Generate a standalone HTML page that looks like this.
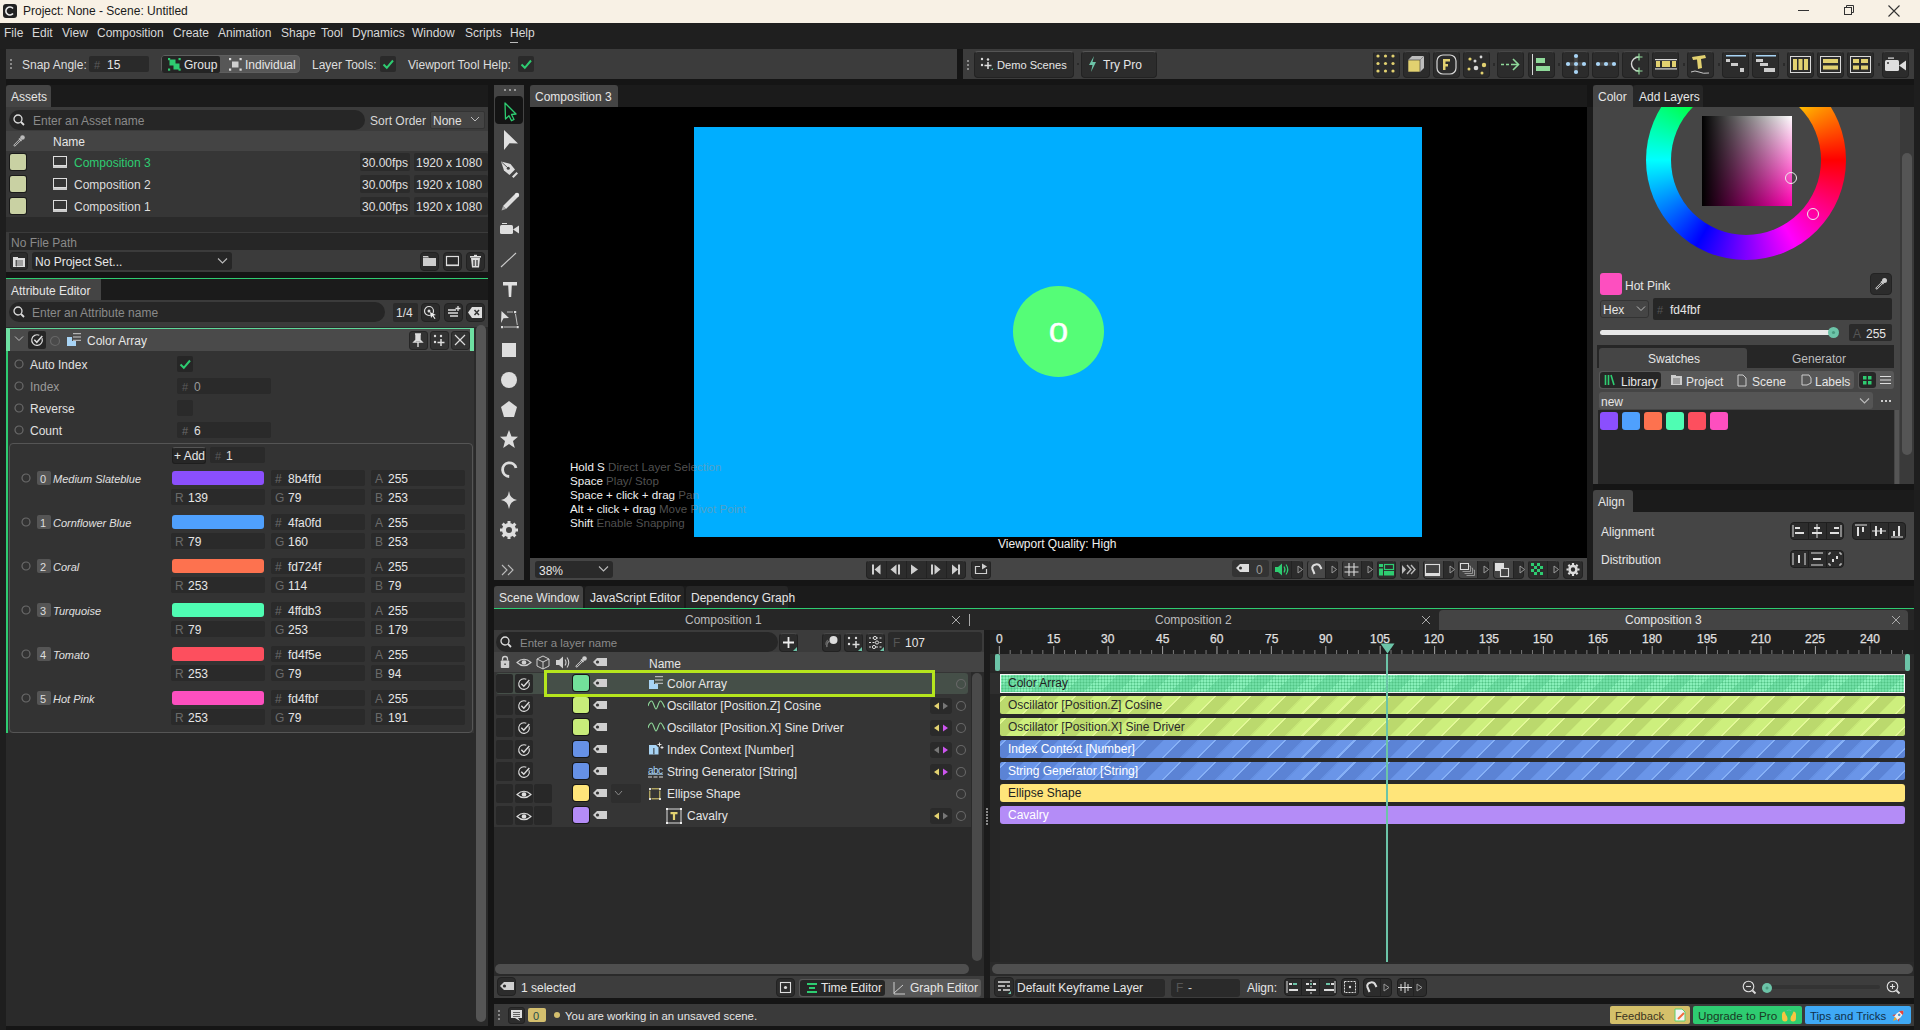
<!DOCTYPE html><html><head><meta charset="utf-8"><style>
*{margin:0;padding:0;box-sizing:border-box}
html,body{width:1920px;height:1030px;overflow:hidden;background:#151515;font-family:"Liberation Sans",sans-serif;font-size:12px;color:#dcdcdc}
.a{position:absolute}
.t{white-space:nowrap}
</style></head><body><div class="a" style="left:0px;top:0px;width:1920px;height:23px;background:#f8f1e5;"></div>
<svg class="a" style="left:3px;top:4px;" width="14" height="14" viewBox="0 0 14 14"><rect x="0" y="0" width="14" height="14" rx="3" fill="#222"/><path d="M10 4.5 A4 4 0 1 0 10 9.5" stroke="#eee" stroke-width="1.6" fill="none"/></svg>
<div class="a t" style="left:23px;top:4px;height:15px;line-height:15px;color:#1a1a1a;font-size:12px;">Project: None - Scene: Untitled</div>
<div class="a" style="left:1798px;top:10px;width:11px;height:1px;background:#333;"></div>
<svg class="a" style="left:1843px;top:4px;" width="12" height="12" viewBox="0 0 12 12"><rect x="1.5" y="3.5" width="7" height="7" fill="none" stroke="#333"/><path d="M3.5 3.5 V1.5 H10.5 V8.5 H8.5" fill="none" stroke="#333"/></svg>
<svg class="a" style="left:1888px;top:5px;" width="12" height="12" viewBox="0 0 12 12"><path d="M0.5 0.5 L11.5 11.5 M11.5 0.5 L0.5 11.5" stroke="#333" stroke-width="1.1"/></svg>
<div class="a" style="left:0px;top:23px;width:1920px;height:26px;background:#1f1f1f;"></div>
<div class="a t" style="left:4px;top:26px;height:14px;line-height:14px;color:#d8d8d8;font-size:12px;">File</div>
<div class="a t" style="left:32px;top:26px;height:14px;line-height:14px;color:#d8d8d8;font-size:12px;">Edit</div>
<div class="a t" style="left:62px;top:26px;height:14px;line-height:14px;color:#d8d8d8;font-size:12px;">View</div>
<div class="a t" style="left:97px;top:26px;height:14px;line-height:14px;color:#d8d8d8;font-size:12px;">Composition</div>
<div class="a t" style="left:173px;top:26px;height:14px;line-height:14px;color:#d8d8d8;font-size:12px;">Create</div>
<div class="a t" style="left:218px;top:26px;height:14px;line-height:14px;color:#d8d8d8;font-size:12px;">Animation</div>
<div class="a t" style="left:281px;top:26px;height:14px;line-height:14px;color:#d8d8d8;font-size:12px;">Shape</div>
<div class="a t" style="left:321px;top:26px;height:14px;line-height:14px;color:#d8d8d8;font-size:12px;">Tool</div>
<div class="a t" style="left:352px;top:26px;height:14px;line-height:14px;color:#d8d8d8;font-size:12px;">Dynamics</div>
<div class="a t" style="left:412px;top:26px;height:14px;line-height:14px;color:#d8d8d8;font-size:12px;">Window</div>
<div class="a t" style="left:465px;top:26px;height:14px;line-height:14px;color:#d8d8d8;font-size:12px;">Scripts</div>
<div class="a t" style="left:510px;top:26px;height:14px;line-height:14px;color:#d8d8d8;font-size:12px;">Help</div>
<div class="a" style="left:510px;top:42px;width:8px;height:1px;background:#bbb;"></div>
<div class="a" style="left:0px;top:49px;width:6px;height:981px;background:#1e1e1e;"></div>
<div class="a" style="left:1914px;top:49px;width:6px;height:981px;background:#1e1e1e;"></div>
<div class="a" style="left:6px;top:49px;width:951px;height:30px;background:#3c3c3c;"></div>
<div class="a" style="left:963px;top:49px;width:951px;height:30px;background:#3c3c3c;"></div>
<div class="a" style="left:10px;top:59px;width:2px;height:2px;background:#8a8a8a;"></div>
<div class="a" style="left:10px;top:63px;width:2px;height:2px;background:#8a8a8a;"></div>
<div class="a" style="left:10px;top:67px;width:2px;height:2px;background:#8a8a8a;"></div>
<div class="a t" style="left:22px;top:58px;height:14px;line-height:14px;color:#dedede;font-size:12px;">Snap Angle:</div>
<div class="a" style="left:89px;top:56px;width:60px;height:16px;background:#2a2a2a;border-radius:2px;"></div>
<div class="a t" style="left:94px;top:58px;height:14px;line-height:14px;color:#5a5a5a;font-size:11px;">#</div>
<div class="a t" style="left:107px;top:58px;height:14px;line-height:14px;color:#e6e6e6;font-size:12px;">15</div>
<div class="a" style="left:161px;top:55px;width:139px;height:18px;background:#575757;border-radius:4px;border:1px solid #5e5e5e;"></div>
<div class="a" style="left:162px;top:56px;width:58px;height:17px;background:#242424;border-radius:2px;"></div>
<svg class="a" style="left:168px;top:58px;" width="14" height="14" viewBox="0 0 14 14"><rect x="0" y="0" width="2.2" height="2.2" fill="#2ecc71"/><rect x="10.5" y="0" width="2.2" height="2.2" fill="#2ecc71"/><rect x="0" y="10.5" width="2.2" height="2.2" fill="#2ecc71"/><rect x="10.5" y="10.5" width="2.2" height="2.2" fill="#2ecc71"/><rect x="1.5" y="1.5" width="6" height="6" fill="#2ecc71"/><rect x="5.5" y="5.5" width="6" height="6" fill="#2ecc71"/></svg>
<div class="a t" style="left:184px;top:58px;height:14px;line-height:14px;color:#e6e6e6;font-size:12px;">Group</div>
<svg class="a" style="left:229px;top:58px;" width="13" height="14" viewBox="0 0 13 14"><rect x="0" y="0" width="2.2" height="2.2" fill="#ddd"/><rect x="10.5" y="0" width="2.2" height="2.2" fill="#ddd"/><rect x="0" y="10.5" width="2.2" height="2.2" fill="#ddd"/><rect x="10.5" y="10.5" width="2.2" height="2.2" fill="#ddd"/><rect x="3" y="3.5" width="6.5" height="6" fill="#d0d0d0"/></svg>
<div class="a t" style="left:245px;top:58px;height:14px;line-height:14px;color:#e6e6e6;font-size:12px;">Individual</div>
<div class="a t" style="left:312px;top:58px;height:14px;line-height:14px;color:#dedede;font-size:12px;">Layer Tools:</div>
<div class="a" style="left:380px;top:56px;width:16px;height:16px;background:#2a2a2a;border-radius:2px;"></div>
<svg class="a" style="left:380px;top:56px;" width="16" height="16" viewBox="0 0 16 16"><path d="M3.5 8.5 L6.8 11.8 L13 4.5" stroke="#2ecc71" stroke-width="2" fill="none"/></svg>
<div class="a t" style="left:408px;top:58px;height:14px;line-height:14px;color:#dedede;font-size:12px;">Viewport Tool Help:</div>
<div class="a" style="left:518px;top:56px;width:16px;height:16px;background:#2a2a2a;border-radius:2px;"></div>
<svg class="a" style="left:518px;top:56px;" width="16" height="16" viewBox="0 0 16 16"><path d="M3.5 8.5 L6.8 11.8 L13 4.5" stroke="#2ecc71" stroke-width="2" fill="none"/></svg>
<div class="a" style="left:967px;top:60px;width:2px;height:2px;background:#8a8a8a;"></div>
<div class="a" style="left:967px;top:64px;width:2px;height:2px;background:#8a8a8a;"></div>
<div class="a" style="left:967px;top:68px;width:2px;height:2px;background:#8a8a8a;"></div>
<div class="a" style="left:974px;top:51px;width:100px;height:27px;background:#2c2c2c;border-radius:4px;border:1px solid #222;border-top-color:#555;"></div>
<svg class="a" style="left:980px;top:57px;" width="13" height="14" viewBox="0 0 13 14"><circle cx="2" cy="2" r="1.2" fill="#ddd"/><circle cx="8" cy="2.5" r="1.2" fill="#ddd"/><circle cx="2" cy="8" r="1.2" fill="#ddd"/><path d="M8 5 V12 M4.5 8.5 H11.5" stroke="#ddd" stroke-width="1.5"/><path d="M11 13 L13 11 V13 Z" fill="#6cc4a8"/></svg>
<div class="a t" style="left:997px;top:58px;height:14px;line-height:14px;color:#e6e6e6;font-size:11.1px;">Demo Scenes</div>
<div class="a" style="left:1077px;top:63px;width:2px;height:2px;background:#2a2a2a;"></div>
<div class="a" style="left:1081px;top:51px;width:76px;height:27px;background:#2c2c2c;border-radius:4px;border:1px solid #222;border-top-color:#555;"></div>
<svg class="a" style="left:1088px;top:56px;" width="9" height="16" viewBox="0 0 9 16"><path d="M6 0 L1 9 H4.5 L3 16 L8 6 H4.5 Z" fill="#6cc4a8"/></svg>
<div class="a t" style="left:1103px;top:58px;height:14px;line-height:14px;color:#e6e6e6;font-size:12px;">Try Pro</div>
<div class="a" style="left:1373px;top:51px;width:27px;height:27px;background:#2c2c2c;border-radius:4px;border:1px solid #232323;border-top-color:#474747;"></div>
<div class="a" style="left:1403px;top:51px;width:27px;height:27px;background:#2c2c2c;border-radius:4px;border:1px solid #232323;border-top-color:#474747;"></div>
<div class="a" style="left:1433px;top:51px;width:27px;height:27px;background:#2c2c2c;border-radius:4px;border:1px solid #232323;border-top-color:#474747;"></div>
<div class="a" style="left:1463px;top:51px;width:27px;height:27px;background:#2c2c2c;border-radius:4px;border:1px solid #232323;border-top-color:#474747;"></div>
<div class="a" style="left:1497px;top:51px;width:27px;height:27px;background:#2c2c2c;border-radius:4px;border:1px solid #232323;border-top-color:#474747;"></div>
<div class="a" style="left:1528px;top:51px;width:27px;height:27px;background:#2c2c2c;border-radius:4px;border:1px solid #232323;border-top-color:#474747;"></div>
<div class="a" style="left:1562px;top:51px;width:27px;height:27px;background:#2c2c2c;border-radius:4px;border:1px solid #232323;border-top-color:#474747;"></div>
<div class="a" style="left:1592px;top:51px;width:27px;height:27px;background:#2c2c2c;border-radius:4px;border:1px solid #232323;border-top-color:#474747;"></div>
<div class="a" style="left:1622px;top:51px;width:27px;height:27px;background:#2c2c2c;border-radius:4px;border:1px solid #232323;border-top-color:#474747;"></div>
<div class="a" style="left:1652px;top:51px;width:27px;height:27px;background:#2c2c2c;border-radius:4px;border:1px solid #232323;border-top-color:#474747;"></div>
<div class="a" style="left:1687px;top:51px;width:27px;height:27px;background:#2c2c2c;border-radius:4px;border:1px solid #232323;border-top-color:#474747;"></div>
<div class="a" style="left:1722px;top:51px;width:27px;height:27px;background:#2c2c2c;border-radius:4px;border:1px solid #232323;border-top-color:#474747;"></div>
<div class="a" style="left:1752px;top:51px;width:27px;height:27px;background:#2c2c2c;border-radius:4px;border:1px solid #232323;border-top-color:#474747;"></div>
<div class="a" style="left:1787px;top:51px;width:27px;height:27px;background:#2c2c2c;border-radius:4px;border:1px solid #232323;border-top-color:#474747;"></div>
<div class="a" style="left:1817px;top:51px;width:27px;height:27px;background:#2c2c2c;border-radius:4px;border:1px solid #232323;border-top-color:#474747;"></div>
<div class="a" style="left:1847px;top:51px;width:27px;height:27px;background:#2c2c2c;border-radius:4px;border:1px solid #232323;border-top-color:#474747;"></div>
<div class="a" style="left:1882px;top:51px;width:27px;height:27px;background:#2c2c2c;border-radius:4px;border:1px solid #232323;border-top-color:#474747;"></div>
<div class="a" style="left:1493px;top:63px;width:2px;height:3px;background:#2a2a2a;"></div>
<div class="a" style="left:1558px;top:63px;width:2px;height:3px;background:#2a2a2a;"></div>
<div class="a" style="left:1683px;top:63px;width:2px;height:3px;background:#2a2a2a;"></div>
<div class="a" style="left:1718px;top:63px;width:2px;height:3px;background:#2a2a2a;"></div>
<div class="a" style="left:1783px;top:63px;width:2px;height:3px;background:#2a2a2a;"></div>
<div class="a" style="left:1878px;top:63px;width:2px;height:3px;background:#2a2a2a;"></div>
<svg class="a" style="left:1373px;top:51px;" width="27" height="27" viewBox="0 0 27 27"><circle cx="5.0" cy="5.0" r="1.6" fill="#e2d170"/><circle cx="5.0" cy="12.5" r="1.6" fill="#e2d170"/><circle cx="5.0" cy="20.0" r="1.6" fill="#e2d170"/><circle cx="12.5" cy="5.0" r="1.6" fill="#e2d170"/><circle cx="12.5" cy="12.5" r="1.6" fill="#e2d170"/><circle cx="12.5" cy="20.0" r="1.6" fill="#e2d170"/><circle cx="20.0" cy="5.0" r="1.6" fill="#e2d170"/><circle cx="20.0" cy="12.5" r="1.6" fill="#e2d170"/><circle cx="20.0" cy="20.0" r="1.6" fill="#e2d170"/></svg>
<svg class="a" style="left:1403px;top:51px;" width="27" height="27" viewBox="0 0 27 27"><path d="M5 9 L9 5 H21 V17 L17 21 Z" fill="#bdbdbd"/><rect x="5" y="9" width="12" height="12" fill="#e2d170" stroke="#333" stroke-width="0.6"/><path d="M17 9 L21 5" stroke="#888"/></svg>
<svg class="a" style="left:1433px;top:51px;" width="27" height="27" viewBox="0 0 27 27"><rect x="4" y="4" width="19" height="19" rx="6" fill="none" stroke="#d8d8d8" stroke-width="1.2"/><rect x="10" y="8" width="2.5" height="11" fill="#e2d170"/><rect x="10" y="8" width="7" height="2.5" fill="#e2d170"/><rect x="10" y="13" width="5" height="2.5" fill="#e2d170"/></svg>
<svg class="a" style="left:1463px;top:51px;" width="27" height="27" viewBox="0 0 27 27"><circle cx="7" cy="8" r="1.6" fill="#e2d170"/><circle cx="18" cy="6" r="1.4" fill="#d8d8d8"/><circle cx="12" cy="10" r="1.5" fill="#d8d8d8"/><circle cx="21" cy="14" r="2.2" fill="#e2d170"/><circle cx="13" cy="17" r="2.3" fill="#d8d8d8"/><circle cx="6" cy="18" r="1.5" fill="#e2d170"/><circle cx="19" cy="22" r="1.5" fill="#e2d170"/></svg>
<svg class="a" style="left:1497px;top:51px;" width="27" height="27" viewBox="0 0 27 27"><path d="M4 13.5 H7 M9 13.5 H12 M14 13.5 H21" stroke="#8fd99a" stroke-width="1.6"/><path d="M16 8 L21.5 13.5 L16 19" stroke="#8fd99a" stroke-width="1.6" fill="none"/></svg>
<svg class="a" style="left:1528px;top:51px;" width="27" height="27" viewBox="0 0 27 27"><rect x="4" y="3" width="1" height="21" fill="#d8d8d8"/><rect x="8" y="7" width="9" height="5" fill="#8fd99a"/><rect x="8" y="15" width="14" height="5" fill="#8fd99a"/></svg>
<svg class="a" style="left:1562px;top:51px;" width="27" height="27" viewBox="0 0 27 27"><path d="M14 5 V21 M6 13 H22" stroke="#4a4a4a" stroke-width="3.5" stroke-linecap="round"/><circle cx="14" cy="5" r="2.1" fill="#a8d4f5"/><circle cx="14" cy="13" r="2.1" fill="#a8d4f5"/><circle cx="14" cy="21" r="2.1" fill="#a8d4f5"/><circle cx="6" cy="13" r="2.1" fill="#a8d4f5"/><circle cx="22" cy="13" r="2.1" fill="#a8d4f5"/></svg>
<svg class="a" style="left:1592px;top:51px;" width="27" height="27" viewBox="0 0 27 27"><path d="M6 13 H22" stroke="#4a4a4a" stroke-width="3.5" stroke-linecap="round"/><circle cx="6" cy="13" r="2.1" fill="#a8d4f5"/><circle cx="14" cy="13" r="2.1" fill="#a8d4f5"/><circle cx="22" cy="13" r="2.1" fill="#a8d4f5"/></svg>
<svg class="a" style="left:1622px;top:51px;" width="27" height="27" viewBox="0 0 27 27"><path d="M17 6 A7.5 7 0 0 0 17 20" stroke="#d8d8d8" stroke-width="1.4" fill="none"/><path d="M17 2.5 V9.5 M13.5 6 H20.5 M17 16.5 V23.5 M13.5 20 H20.5" stroke="#8fd99a" stroke-width="1.2"/></svg>
<svg class="a" style="left:1652px;top:51px;" width="27" height="27" viewBox="0 0 27 27"><rect x="3" y="8" width="22" height="1.2" fill="#d8d8d8"/><rect x="3" y="17.3" width="22" height="1.2" fill="#d8d8d8"/><rect x="4" y="10" width="4" height="6" fill="#e2d170"/><rect x="10" y="10" width="8" height="6" fill="#e2d170"/><rect x="20" y="10" width="4" height="6" fill="#e2d170"/></svg>
<svg class="a" style="left:1687px;top:51px;" width="27" height="27" viewBox="0 0 27 27"><path d="M5 6 L18 4 L19 7 L14 8 L15 17 L11 18 L10 8.5 L6 9 Z" fill="#e2d170"/><path d="M4 21 Q8 19 12 21 T22 22" stroke="#d8d8d8" stroke-width="0.9" fill="none"/></svg>
<svg class="a" style="left:1722px;top:51px;" width="27" height="27" viewBox="0 0 27 27"><rect x="4" y="4" width="20" height="1.5" fill="#a8d4f5"/><rect x="4" y="8" width="4" height="3" fill="#ccc"/><rect x="9" y="12" width="7" height="3" fill="#ccc"/><rect x="18" y="17" width="4" height="4" fill="#ccc"/></svg>
<svg class="a" style="left:1752px;top:51px;" width="27" height="27" viewBox="0 0 27 27"><rect x="4" y="4" width="20" height="1.5" fill="#a8d4f5"/><rect x="4" y="8" width="7" height="3" fill="#ccc"/><rect x="8" y="12" width="8" height="3" fill="#ccc"/><rect x="12" y="17" width="11" height="4" fill="#ccc"/></svg>
<svg class="a" style="left:1787px;top:51px;" width="27" height="27" viewBox="0 0 27 27"><rect x="3.5" y="5.5" width="20" height="16" fill="none" stroke="#d8d8d8"/><rect x="6" y="8" width="4" height="11" fill="#e2d170"/><rect x="11.5" y="8" width="4" height="11" fill="#e2d170"/><rect x="17" y="8" width="4" height="11" fill="#e2d170"/></svg>
<svg class="a" style="left:1817px;top:51px;" width="27" height="27" viewBox="0 0 27 27"><rect x="3.5" y="5.5" width="20" height="16" fill="none" stroke="#d8d8d8"/><rect x="6" y="8" width="15" height="4" fill="#e2d170"/><rect x="6" y="14.5" width="15" height="4" fill="#e2d170"/></svg>
<svg class="a" style="left:1847px;top:51px;" width="27" height="27" viewBox="0 0 27 27"><rect x="3.5" y="5.5" width="20" height="16" fill="none" stroke="#d8d8d8"/><rect x="6" y="8" width="6" height="4" fill="#e2d170"/><rect x="14" y="8" width="7" height="4" fill="#e2d170"/><rect x="6" y="14.5" width="6" height="4" fill="#e2d170"/><rect x="14" y="14.5" width="7" height="4" fill="#e2d170"/></svg>
<svg class="a" style="left:1882px;top:51px;" width="27" height="27" viewBox="0 0 27 27"><rect x="3" y="9" width="14" height="11" rx="1.5" fill="#ddd"/><path d="M17 14.5 L24 9.5 V19.5 Z" fill="#ddd"/><rect x="6" y="6.5" width="6" height="1.2" fill="#ddd"/><circle cx="6" cy="12" r="1" fill="#333"/></svg>
<div class="a" style="left:6px;top:85px;width:482px;height:22px;background:#1b1b1b;"></div>
<div class="a" style="left:6px;top:85px;width:45px;height:22px;background:#444;border-radius:3px 3px 0 0;"></div>
<div class="a t" style="left:11px;top:90px;height:14px;line-height:14px;color:#e6e6e6;font-size:12px;">Assets</div>
<div class="a" style="left:6px;top:107px;width:482px;height:24px;background:#3b3b3b;"></div>
<div class="a" style="left:9px;top:110px;width:356px;height:20px;background:#262626;border-radius:10px;"></div>
<svg class="a" style="left:13px;top:114px;" width="12" height="12" viewBox="0 0 12 12"><circle cx="5" cy="5" r="4" fill="none" stroke="#ddd" stroke-width="1.3"/><path d="M8 8 L11 11" stroke="#ddd" stroke-width="1.8"/></svg>
<div class="a t" style="left:33px;top:114px;height:14px;line-height:14px;color:#8a8a8a;font-size:12px;">Enter an Asset name</div>
<div class="a t" style="left:370px;top:114px;height:14px;line-height:14px;color:#d8d8d8;font-size:12px;">Sort Order</div>
<div class="a" style="left:430px;top:111px;width:55px;height:18px;background:#444;border-radius:2px;border:1px solid #333;"></div>
<div class="a t" style="left:433px;top:114px;height:14px;line-height:14px;color:#e0e0e0;font-size:12px;">None</div>
<svg class="a" style="left:470px;top:115px;" width="10" height="8" viewBox="0 0 10 8"><path d="M1 2 L5 6 L9 2" stroke="#bbb" fill="none"/></svg>
<div class="a" style="left:6px;top:131px;width:482px;height:20px;background:#444;"></div>
<svg class="a" style="left:12px;top:134px;" width="14" height="14" viewBox="0 0 14 14"><path d="M2 12 L9 5" stroke="#bbb" stroke-width="2.2"/><path d="M2.6 11.4 L8.4 5.6" stroke="#444" stroke-width="0.9"/><circle cx="10.5" cy="3.5" r="2.3" fill="#bbb"/><path d="M7 4.5 L9.5 7" stroke="#bbb" stroke-width="1.5"/></svg>
<div class="a t" style="left:53px;top:135px;height:14px;line-height:14px;color:#e6e6e6;font-size:12px;">Name</div>
<div class="a" style="left:6px;top:151px;width:482px;height:81px;background:#363636;"></div>
<div class="a" style="left:10px;top:154px;width:16px;height:16px;background:#c9d1a3;border-radius:2px;box-shadow:0 0 0 1px #1a1a1a;"></div>
<svg class="a" style="left:53px;top:156px;" width="14" height="12" viewBox="0 0 14 12"><rect x="0.5" y="0.5" width="13" height="9" fill="none" stroke="#ddd"/><rect x="0" y="10" width="14" height="2" fill="#ccc"/></svg>
<div class="a t" style="left:74px;top:156px;height:14px;line-height:14px;color:#2ecc71;font-size:12px;">Composition 3</div>
<div class="a" style="left:360px;top:153px;width:50px;height:18px;background:#2b2b2b;border-radius:2px;"></div>
<div class="a t" style="left:362px;top:156px;height:14px;line-height:14px;color:#e0e0e0;font-size:12px;">30.00fps</div>
<div class="a" style="left:414px;top:153px;width:74px;height:18px;background:#2b2b2b;border-radius:2px;"></div>
<div class="a t" style="left:416px;top:156px;height:14px;line-height:14px;color:#e0e0e0;font-size:12px;">1920 x 1080</div>
<div class="a" style="left:10px;top:176px;width:16px;height:16px;background:#c9d1a3;border-radius:2px;box-shadow:0 0 0 1px #1a1a1a;"></div>
<svg class="a" style="left:53px;top:178px;" width="14" height="12" viewBox="0 0 14 12"><rect x="0.5" y="0.5" width="13" height="9" fill="none" stroke="#ddd"/><rect x="0" y="10" width="14" height="2" fill="#ccc"/></svg>
<div class="a t" style="left:74px;top:178px;height:14px;line-height:14px;color:#dedede;font-size:12px;">Composition 2</div>
<div class="a" style="left:360px;top:175px;width:50px;height:18px;background:#2b2b2b;border-radius:2px;"></div>
<div class="a t" style="left:362px;top:178px;height:14px;line-height:14px;color:#e0e0e0;font-size:12px;">30.00fps</div>
<div class="a" style="left:414px;top:175px;width:74px;height:18px;background:#2b2b2b;border-radius:2px;"></div>
<div class="a t" style="left:416px;top:178px;height:14px;line-height:14px;color:#e0e0e0;font-size:12px;">1920 x 1080</div>
<div class="a" style="left:10px;top:198px;width:16px;height:16px;background:#c9d1a3;border-radius:2px;box-shadow:0 0 0 1px #1a1a1a;"></div>
<svg class="a" style="left:53px;top:200px;" width="14" height="12" viewBox="0 0 14 12"><rect x="0.5" y="0.5" width="13" height="9" fill="none" stroke="#ddd"/><rect x="0" y="10" width="14" height="2" fill="#ccc"/></svg>
<div class="a t" style="left:74px;top:200px;height:14px;line-height:14px;color:#dedede;font-size:12px;">Composition 1</div>
<div class="a" style="left:360px;top:197px;width:50px;height:18px;background:#2b2b2b;border-radius:2px;"></div>
<div class="a t" style="left:362px;top:200px;height:14px;line-height:14px;color:#e0e0e0;font-size:12px;">30.00fps</div>
<div class="a" style="left:414px;top:197px;width:74px;height:18px;background:#2b2b2b;border-radius:2px;"></div>
<div class="a t" style="left:416px;top:200px;height:14px;line-height:14px;color:#e0e0e0;font-size:12px;">1920 x 1080</div>
<div class="a" style="left:6px;top:217px;width:482px;height:15px;background:#2a2a2a;"></div>
<div class="a" style="left:6px;top:232px;width:482px;height:40px;background:#3b3b3b;"></div>
<div class="a" style="left:9px;top:233px;width:479px;height:17px;background:#262626;"></div>
<div class="a t" style="left:11px;top:236px;height:14px;line-height:14px;color:#8a8a8a;font-size:12px;">No File Path</div>
<div class="a" style="left:10px;top:252px;width:18px;height:18px;background:#2b2b2b;border-radius:3px;border:1px solid #222;"></div>
<svg class="a" style="left:12px;top:254px;" width="14" height="14" viewBox="0 0 14 14"><path d="M1 3 H6 V4 H1Z" fill="#ddd"/><rect x="1" y="4" width="12" height="9" fill="#ddd"/><path d="M3 7 H11 M3 9 H11 M3 11 H11" stroke="#444" stroke-width="0.8"/><path d="M4.5 6 V12.5" stroke="#444" stroke-width="0.8"/></svg>
<div class="a" style="left:32px;top:252px;width:200px;height:18px;background:#262626;border-radius:3px;"></div>
<div class="a t" style="left:35px;top:255px;height:14px;line-height:14px;color:#e6e6e6;font-size:12px;">No Project Set...</div>
<svg class="a" style="left:217px;top:257px;" width="11" height="8" viewBox="0 0 11 8"><path d="M1 1.5 L5.5 6 L10 1.5" stroke="#bbb" fill="none" stroke-width="1.1"/></svg>
<div class="a" style="left:420px;top:252px;width:19px;height:19px;background:#2b2b2b;border-radius:4px;border:1px solid #222;"></div>
<svg class="a" style="left:422px;top:254px;" width="14" height="14" viewBox="0 0 14 14"><path d="M1 2 H6 L7 3.5 H1 Z" fill="#ccc"/><rect x="1" y="4" width="13" height="8" fill="#ccc"/></svg>
<div class="a" style="left:443px;top:252px;width:19px;height:19px;background:#2b2b2b;border-radius:4px;border:1px solid #222;"></div>
<svg class="a" style="left:445px;top:254px;" width="14" height="14" viewBox="0 0 14 14"><rect x="1.5" y="2.5" width="12" height="9" fill="none" stroke="#ddd" stroke-width="1.2"/><rect x="1" y="10.5" width="13" height="1.5" fill="#ddd"/></svg>
<div class="a" style="left:466px;top:252px;width:19px;height:19px;background:#2b2b2b;border-radius:4px;border:1px solid #222;"></div>
<svg class="a" style="left:468px;top:254px;" width="14" height="14" viewBox="0 0 14 14"><path d="M3 4 H12 L11 13.5 H4 Z" fill="#ddd"/><rect x="2" y="2" width="11" height="1.6" fill="#ddd"/><rect x="6" y="0.8" width="3" height="1.5" fill="#ddd"/><path d="M6 6 V12 M9 6 V12" stroke="#2b2b2b" stroke-width="1.2"/></svg>
<div class="a" style="left:6px;top:278px;width:482px;height:1px;background:#2ecc71;"></div>
<div class="a" style="left:6px;top:279px;width:482px;height:21px;background:#1b1b1b;"></div>
<div class="a" style="left:6px;top:279px;width:95px;height:21px;background:#444;"></div>
<div class="a t" style="left:11px;top:284px;height:14px;line-height:14px;color:#e6e6e6;font-size:12px;">Attribute Editor</div>
<div class="a" style="left:6px;top:300px;width:482px;height:27px;background:#3b3b3b;"></div>
<div class="a" style="left:9px;top:302px;width:376px;height:20px;background:#262626;border-radius:10px;"></div>
<svg class="a" style="left:13px;top:306px;" width="12" height="12" viewBox="0 0 12 12"><circle cx="5" cy="5" r="4" fill="none" stroke="#ddd" stroke-width="1.3"/><path d="M8 8 L11 11" stroke="#ddd" stroke-width="1.8"/></svg>
<div class="a t" style="left:32px;top:306px;height:14px;line-height:14px;color:#8a8a8a;font-size:12px;">Enter an Attribute name</div>
<div class="a" style="left:393px;top:303px;width:25px;height:19px;background:#2b2b2b;border-radius:2px;"></div>
<div class="a t" style="left:396px;top:306px;height:14px;line-height:14px;color:#e0e0e0;font-size:12px;">1/4</div>
<div class="a" style="left:421px;top:303px;width:19px;height:19px;background:#2b2b2b;border-radius:4px;border:1px solid #222;"></div>
<div class="a" style="left:444px;top:303px;width:19px;height:19px;background:#2b2b2b;border-radius:4px;border:1px solid #222;"></div>
<div class="a" style="left:466px;top:303px;width:19px;height:19px;background:#2b2b2b;border-radius:4px;border:1px solid #222;"></div>
<svg class="a" style="left:423px;top:305px;" width="15" height="15" viewBox="0 0 15 15"><circle cx="6" cy="6" r="4.5" fill="none" stroke="#ddd" stroke-width="1.2"/><circle cx="6" cy="6" r="1.5" fill="#ddd"/><path d="M7 7 L13 10 L10.5 10.5 L12.5 13.5 L11.5 14 L9.5 11 L8 13 Z" fill="#eee"/></svg>
<svg class="a" style="left:446px;top:305px;" width="15" height="15" viewBox="0 0 15 15"><path d="M2 5 H10 M2 8 H12 M4 11 H12" stroke="#ddd" stroke-width="1.6"/><path d="M12 1 V6 M9.5 3.5 H14.5" stroke="#ddd" stroke-width="1.3"/></svg>
<svg class="a" style="left:468px;top:306px;" width="15" height="13" viewBox="0 0 15 13"><path d="M4 1 H14 V12 H4 L0 6.5 Z" fill="#ddd"/><path d="M6.5 4 L11 9 M11 4 L6.5 9" stroke="#333" stroke-width="1.5"/></svg>
<div class="a" style="left:6px;top:327px;width:470px;height:699px;background:#2a2a2a;"></div>
<div class="a" style="left:6px;top:351px;width:468px;height:382px;background:#333;"></div>
<div class="a" style="left:476px;top:327px;width:12px;height:699px;background:#2a2a2a;"></div>
<div class="a" style="left:476px;top:325px;width:10px;height:697px;background:#555;border-radius:5px;"></div>
<div class="a" style="left:6px;top:328px;width:467px;height:23px;background:#4a4a4a;border-top:1px solid #5fd89a;"></div>
<div class="a" style="left:6px;top:328px;width:4px;height:23px;background:#6ee0a2;"></div>
<svg class="a" style="left:14px;top:335px;" width="10" height="8" viewBox="0 0 10 8"><path d="M1 1.5 L5 5.5 L9 1.5" stroke="#bbb" fill="none"/></svg>
<div class="a" style="left:28px;top:331px;width:18px;height:18px;background:#262626;border-radius:2px;"></div>
<svg class="a" style="left:30px;top:333px;" width="14" height="14" viewBox="0 0 14 14"><path d="M12 5.3 A5.3 5.3 0 1 1 9.3 2.3" fill="none" stroke="#ddd" stroke-width="1.2"/><path d="M4.3 6.8 L6.8 9.3 L12.3 3" stroke="#ddd" stroke-width="1.5" fill="none"/></svg>
<svg class="a" style="left:49px;top:335px;" width="12" height="12" viewBox="0 0 12 12"><circle cx="6" cy="6" r="4.5" fill="none" stroke="#666" stroke-width="1.2"/></svg>
<svg class="a" style="left:66px;top:333px;" width="15" height="14" viewBox="0 0 15 14"><path d="M1 4 H6 V8 H10 V13 H1 Z" fill="#a8d4f5"/><path d="M7 0.7 H15 M7 4 H15 M7 7.3 H15" stroke="#ddd" stroke-width="0.9"/></svg>
<div class="a t" style="left:87px;top:334px;height:14px;line-height:14px;color:#e6e6e6;font-size:12px;">Color Array</div>
<div class="a" style="left:409px;top:331px;width:19px;height:19px;background:#333;border-radius:3px;border:1px solid #262626;"></div>
<svg class="a" style="left:411px;top:333px;" width="14" height="14" viewBox="0 0 14 14"><path d="M4 1 H10 M5 1 V7 L3 9 H11 L9 7 V1 M7 9 V14" stroke="#ddd" stroke-width="1.4" fill="none"/><rect x="5" y="1" width="4" height="7" fill="#ddd"/></svg>
<div class="a" style="left:430px;top:331px;width:19px;height:19px;background:#333;border-radius:3px;border:1px solid #262626;"></div>
<svg class="a" style="left:432px;top:333px;" width="14" height="14" viewBox="0 0 14 14"><circle cx="3" cy="3" r="1.2" fill="#ddd"/><circle cx="9" cy="3" r="1.2" fill="#ddd"/><circle cx="3" cy="9" r="1.2" fill="#ddd"/><path d="M9 6 V13 M5.5 9.5 H12.5" stroke="#ddd" stroke-width="1.5"/></svg>
<div class="a" style="left:451px;top:331px;width:19px;height:19px;background:#333;border-radius:3px;border:1px solid #262626;"></div>
<svg class="a" style="left:453px;top:333px;" width="14" height="14" viewBox="0 0 14 14"><path d="M2 2 L12 12 M12 2 L2 12" stroke="#ddd" stroke-width="1.2"/></svg>
<svg class="a" style="left:14px;top:359px;" width="10" height="10" viewBox="0 0 10 10"><circle cx="5" cy="5" r="4" fill="none" stroke="#6a6a6a" stroke-width="1.2"/></svg>
<div class="a t" style="left:30px;top:358px;height:14px;line-height:14px;color:#e0e0e0;font-size:12px;">Auto Index</div>
<svg class="a" style="left:14px;top:381px;" width="10" height="10" viewBox="0 0 10 10"><circle cx="5" cy="5" r="4" fill="none" stroke="#6a6a6a" stroke-width="1.2"/></svg>
<div class="a t" style="left:30px;top:380px;height:14px;line-height:14px;color:#9a9a9a;font-size:12px;">Index</div>
<svg class="a" style="left:14px;top:403px;" width="10" height="10" viewBox="0 0 10 10"><circle cx="5" cy="5" r="4" fill="none" stroke="#6a6a6a" stroke-width="1.2"/></svg>
<div class="a t" style="left:30px;top:402px;height:14px;line-height:14px;color:#e0e0e0;font-size:12px;">Reverse</div>
<svg class="a" style="left:14px;top:425px;" width="10" height="10" viewBox="0 0 10 10"><circle cx="5" cy="5" r="4" fill="none" stroke="#6a6a6a" stroke-width="1.2"/></svg>
<div class="a t" style="left:30px;top:424px;height:14px;line-height:14px;color:#e0e0e0;font-size:12px;">Count</div>
<div class="a" style="left:177px;top:356px;width:16px;height:16px;background:#262626;border-radius:2px;"></div>
<svg class="a" style="left:177px;top:356px;" width="16" height="16" viewBox="0 0 16 16"><path d="M3.5 8.5 L6.8 11.8 L13 4.5" stroke="#2ecc71" stroke-width="2" fill="none"/></svg>
<div class="a" style="left:177px;top:378px;width:94px;height:16px;background:#2a2a2a;border-radius:2px;"></div>
<div class="a t" style="left:182px;top:380px;height:14px;line-height:14px;color:#5a5a5a;font-size:11px;">#</div>
<div class="a t" style="left:194px;top:380px;height:14px;line-height:14px;color:#9a9a9a;font-size:12px;">0</div>
<div class="a" style="left:177px;top:400px;width:16px;height:16px;background:#2a2a2a;border-radius:2px;"></div>
<div class="a" style="left:177px;top:422px;width:94px;height:16px;background:#2a2a2a;border-radius:2px;"></div>
<div class="a t" style="left:182px;top:424px;height:14px;line-height:14px;color:#6a6a6a;font-size:11px;">#</div>
<div class="a t" style="left:194px;top:424px;height:14px;line-height:14px;color:#e0e0e0;font-size:12px;">6</div>
<div class="a" style="left:9px;top:443px;width:464px;height:290px;border:1px solid #555;border-radius:4px;background:#333;"></div>
<div class="a" style="left:172px;top:447px;width:34px;height:17px;background:#262626;border-radius:3px;border:1px solid #1e1e1e;border-top-color:#555;"></div>
<div class="a t" style="left:174px;top:449px;height:14px;line-height:14px;color:#e6e6e6;font-size:12px;">+ Add</div>
<div class="a" style="left:210px;top:447px;width:55px;height:16px;background:#2a2a2a;border-radius:2px;"></div>
<div class="a t" style="left:215px;top:449px;height:14px;line-height:14px;color:#5a5a5a;font-size:11px;">#</div>
<div class="a t" style="left:226px;top:449px;height:14px;line-height:14px;color:#e0e0e0;font-size:12px;">1</div>
<svg class="a" style="left:21px;top:473px;" width="10" height="10" viewBox="0 0 10 10"><circle cx="5" cy="5" r="4" fill="none" stroke="#6a6a6a" stroke-width="1.2"/></svg>
<div class="a" style="left:37px;top:471px;width:14px;height:14px;background:#555;border-radius:2px;"></div>
<div class="a t" style="left:40px;top:472px;height:14px;line-height:14px;color:#ddd;font-size:11px;">0</div>
<div class="a t" style="left:53px;top:472px;height:14px;line-height:14px;color:#e0e0e0;font-size:11px;font-style:italic;">Medium Slateblue</div>
<div class="a" style="left:172px;top:471px;width:92px;height:14px;background:#8b4ffd;border-radius:3px;"></div>
<div class="a" style="left:271px;top:470px;width:94px;height:16px;background:#2a2a2a;border-radius:2px;"></div>
<div class="a t" style="left:275px;top:472px;height:14px;line-height:14px;color:#6a6a6a;font-size:12px;">#</div>
<div class="a t" style="left:288px;top:472px;height:14px;line-height:14px;color:#e6e6e6;font-size:12px;">8b4ffd</div>
<div class="a" style="left:371px;top:470px;width:94px;height:16px;background:#2a2a2a;border-radius:2px;"></div>
<div class="a t" style="left:375px;top:472px;height:14px;line-height:14px;color:#6a6a6a;font-size:12px;">A</div>
<div class="a t" style="left:388px;top:472px;height:14px;line-height:14px;color:#e6e6e6;font-size:12px;">255</div>
<div class="a" style="left:171px;top:489px;width:94px;height:16px;background:#2a2a2a;border-radius:2px;"></div>
<div class="a t" style="left:175px;top:491px;height:14px;line-height:14px;color:#6a6a6a;font-size:12px;">R</div>
<div class="a t" style="left:188px;top:491px;height:14px;line-height:14px;color:#e6e6e6;font-size:12px;">139</div>
<div class="a" style="left:271px;top:489px;width:94px;height:16px;background:#2a2a2a;border-radius:2px;"></div>
<div class="a t" style="left:275px;top:491px;height:14px;line-height:14px;color:#6a6a6a;font-size:12px;">G</div>
<div class="a t" style="left:288px;top:491px;height:14px;line-height:14px;color:#e6e6e6;font-size:12px;">79</div>
<div class="a" style="left:371px;top:489px;width:94px;height:16px;background:#2a2a2a;border-radius:2px;"></div>
<div class="a t" style="left:375px;top:491px;height:14px;line-height:14px;color:#6a6a6a;font-size:12px;">B</div>
<div class="a t" style="left:388px;top:491px;height:14px;line-height:14px;color:#e6e6e6;font-size:12px;">253</div>
<svg class="a" style="left:21px;top:517px;" width="10" height="10" viewBox="0 0 10 10"><circle cx="5" cy="5" r="4" fill="none" stroke="#6a6a6a" stroke-width="1.2"/></svg>
<div class="a" style="left:37px;top:515px;width:14px;height:14px;background:#555;border-radius:2px;"></div>
<div class="a t" style="left:40px;top:516px;height:14px;line-height:14px;color:#ddd;font-size:11px;">1</div>
<div class="a t" style="left:53px;top:516px;height:14px;line-height:14px;color:#e0e0e0;font-size:11px;font-style:italic;">Cornflower Blue</div>
<div class="a" style="left:172px;top:515px;width:92px;height:14px;background:#4fa0fd;border-radius:3px;"></div>
<div class="a" style="left:271px;top:514px;width:94px;height:16px;background:#2a2a2a;border-radius:2px;"></div>
<div class="a t" style="left:275px;top:516px;height:14px;line-height:14px;color:#6a6a6a;font-size:12px;">#</div>
<div class="a t" style="left:288px;top:516px;height:14px;line-height:14px;color:#e6e6e6;font-size:12px;">4fa0fd</div>
<div class="a" style="left:371px;top:514px;width:94px;height:16px;background:#2a2a2a;border-radius:2px;"></div>
<div class="a t" style="left:375px;top:516px;height:14px;line-height:14px;color:#6a6a6a;font-size:12px;">A</div>
<div class="a t" style="left:388px;top:516px;height:14px;line-height:14px;color:#e6e6e6;font-size:12px;">255</div>
<div class="a" style="left:171px;top:533px;width:94px;height:16px;background:#2a2a2a;border-radius:2px;"></div>
<div class="a t" style="left:175px;top:535px;height:14px;line-height:14px;color:#6a6a6a;font-size:12px;">R</div>
<div class="a t" style="left:188px;top:535px;height:14px;line-height:14px;color:#e6e6e6;font-size:12px;">79</div>
<div class="a" style="left:271px;top:533px;width:94px;height:16px;background:#2a2a2a;border-radius:2px;"></div>
<div class="a t" style="left:275px;top:535px;height:14px;line-height:14px;color:#6a6a6a;font-size:12px;">G</div>
<div class="a t" style="left:288px;top:535px;height:14px;line-height:14px;color:#e6e6e6;font-size:12px;">160</div>
<div class="a" style="left:371px;top:533px;width:94px;height:16px;background:#2a2a2a;border-radius:2px;"></div>
<div class="a t" style="left:375px;top:535px;height:14px;line-height:14px;color:#6a6a6a;font-size:12px;">B</div>
<div class="a t" style="left:388px;top:535px;height:14px;line-height:14px;color:#e6e6e6;font-size:12px;">253</div>
<svg class="a" style="left:21px;top:561px;" width="10" height="10" viewBox="0 0 10 10"><circle cx="5" cy="5" r="4" fill="none" stroke="#6a6a6a" stroke-width="1.2"/></svg>
<div class="a" style="left:37px;top:559px;width:14px;height:14px;background:#555;border-radius:2px;"></div>
<div class="a t" style="left:40px;top:560px;height:14px;line-height:14px;color:#ddd;font-size:11px;">2</div>
<div class="a t" style="left:53px;top:560px;height:14px;line-height:14px;color:#e0e0e0;font-size:11px;font-style:italic;">Coral</div>
<div class="a" style="left:172px;top:559px;width:92px;height:14px;background:#fd724f;border-radius:3px;"></div>
<div class="a" style="left:271px;top:558px;width:94px;height:16px;background:#2a2a2a;border-radius:2px;"></div>
<div class="a t" style="left:275px;top:560px;height:14px;line-height:14px;color:#6a6a6a;font-size:12px;">#</div>
<div class="a t" style="left:288px;top:560px;height:14px;line-height:14px;color:#e6e6e6;font-size:12px;">fd724f</div>
<div class="a" style="left:371px;top:558px;width:94px;height:16px;background:#2a2a2a;border-radius:2px;"></div>
<div class="a t" style="left:375px;top:560px;height:14px;line-height:14px;color:#6a6a6a;font-size:12px;">A</div>
<div class="a t" style="left:388px;top:560px;height:14px;line-height:14px;color:#e6e6e6;font-size:12px;">255</div>
<div class="a" style="left:171px;top:577px;width:94px;height:16px;background:#2a2a2a;border-radius:2px;"></div>
<div class="a t" style="left:175px;top:579px;height:14px;line-height:14px;color:#6a6a6a;font-size:12px;">R</div>
<div class="a t" style="left:188px;top:579px;height:14px;line-height:14px;color:#e6e6e6;font-size:12px;">253</div>
<div class="a" style="left:271px;top:577px;width:94px;height:16px;background:#2a2a2a;border-radius:2px;"></div>
<div class="a t" style="left:275px;top:579px;height:14px;line-height:14px;color:#6a6a6a;font-size:12px;">G</div>
<div class="a t" style="left:288px;top:579px;height:14px;line-height:14px;color:#e6e6e6;font-size:12px;">114</div>
<div class="a" style="left:371px;top:577px;width:94px;height:16px;background:#2a2a2a;border-radius:2px;"></div>
<div class="a t" style="left:375px;top:579px;height:14px;line-height:14px;color:#6a6a6a;font-size:12px;">B</div>
<div class="a t" style="left:388px;top:579px;height:14px;line-height:14px;color:#e6e6e6;font-size:12px;">79</div>
<svg class="a" style="left:21px;top:605px;" width="10" height="10" viewBox="0 0 10 10"><circle cx="5" cy="5" r="4" fill="none" stroke="#6a6a6a" stroke-width="1.2"/></svg>
<div class="a" style="left:37px;top:603px;width:14px;height:14px;background:#555;border-radius:2px;"></div>
<div class="a t" style="left:40px;top:604px;height:14px;line-height:14px;color:#ddd;font-size:11px;">3</div>
<div class="a t" style="left:53px;top:604px;height:14px;line-height:14px;color:#e0e0e0;font-size:11px;font-style:italic;">Turquoise</div>
<div class="a" style="left:172px;top:603px;width:92px;height:14px;background:#4ffdb3;border-radius:3px;"></div>
<div class="a" style="left:271px;top:602px;width:94px;height:16px;background:#2a2a2a;border-radius:2px;"></div>
<div class="a t" style="left:275px;top:604px;height:14px;line-height:14px;color:#6a6a6a;font-size:12px;">#</div>
<div class="a t" style="left:288px;top:604px;height:14px;line-height:14px;color:#e6e6e6;font-size:12px;">4ffdb3</div>
<div class="a" style="left:371px;top:602px;width:94px;height:16px;background:#2a2a2a;border-radius:2px;"></div>
<div class="a t" style="left:375px;top:604px;height:14px;line-height:14px;color:#6a6a6a;font-size:12px;">A</div>
<div class="a t" style="left:388px;top:604px;height:14px;line-height:14px;color:#e6e6e6;font-size:12px;">255</div>
<div class="a" style="left:171px;top:621px;width:94px;height:16px;background:#2a2a2a;border-radius:2px;"></div>
<div class="a t" style="left:175px;top:623px;height:14px;line-height:14px;color:#6a6a6a;font-size:12px;">R</div>
<div class="a t" style="left:188px;top:623px;height:14px;line-height:14px;color:#e6e6e6;font-size:12px;">79</div>
<div class="a" style="left:271px;top:621px;width:94px;height:16px;background:#2a2a2a;border-radius:2px;"></div>
<div class="a t" style="left:275px;top:623px;height:14px;line-height:14px;color:#6a6a6a;font-size:12px;">G</div>
<div class="a t" style="left:288px;top:623px;height:14px;line-height:14px;color:#e6e6e6;font-size:12px;">253</div>
<div class="a" style="left:371px;top:621px;width:94px;height:16px;background:#2a2a2a;border-radius:2px;"></div>
<div class="a t" style="left:375px;top:623px;height:14px;line-height:14px;color:#6a6a6a;font-size:12px;">B</div>
<div class="a t" style="left:388px;top:623px;height:14px;line-height:14px;color:#e6e6e6;font-size:12px;">179</div>
<svg class="a" style="left:21px;top:649px;" width="10" height="10" viewBox="0 0 10 10"><circle cx="5" cy="5" r="4" fill="none" stroke="#6a6a6a" stroke-width="1.2"/></svg>
<div class="a" style="left:37px;top:647px;width:14px;height:14px;background:#555;border-radius:2px;"></div>
<div class="a t" style="left:40px;top:648px;height:14px;line-height:14px;color:#ddd;font-size:11px;">4</div>
<div class="a t" style="left:53px;top:648px;height:14px;line-height:14px;color:#e0e0e0;font-size:11px;font-style:italic;">Tomato</div>
<div class="a" style="left:172px;top:647px;width:92px;height:14px;background:#fd4f5e;border-radius:3px;"></div>
<div class="a" style="left:271px;top:646px;width:94px;height:16px;background:#2a2a2a;border-radius:2px;"></div>
<div class="a t" style="left:275px;top:648px;height:14px;line-height:14px;color:#6a6a6a;font-size:12px;">#</div>
<div class="a t" style="left:288px;top:648px;height:14px;line-height:14px;color:#e6e6e6;font-size:12px;">fd4f5e</div>
<div class="a" style="left:371px;top:646px;width:94px;height:16px;background:#2a2a2a;border-radius:2px;"></div>
<div class="a t" style="left:375px;top:648px;height:14px;line-height:14px;color:#6a6a6a;font-size:12px;">A</div>
<div class="a t" style="left:388px;top:648px;height:14px;line-height:14px;color:#e6e6e6;font-size:12px;">255</div>
<div class="a" style="left:171px;top:665px;width:94px;height:16px;background:#2a2a2a;border-radius:2px;"></div>
<div class="a t" style="left:175px;top:667px;height:14px;line-height:14px;color:#6a6a6a;font-size:12px;">R</div>
<div class="a t" style="left:188px;top:667px;height:14px;line-height:14px;color:#e6e6e6;font-size:12px;">253</div>
<div class="a" style="left:271px;top:665px;width:94px;height:16px;background:#2a2a2a;border-radius:2px;"></div>
<div class="a t" style="left:275px;top:667px;height:14px;line-height:14px;color:#6a6a6a;font-size:12px;">G</div>
<div class="a t" style="left:288px;top:667px;height:14px;line-height:14px;color:#e6e6e6;font-size:12px;">79</div>
<div class="a" style="left:371px;top:665px;width:94px;height:16px;background:#2a2a2a;border-radius:2px;"></div>
<div class="a t" style="left:375px;top:667px;height:14px;line-height:14px;color:#6a6a6a;font-size:12px;">B</div>
<div class="a t" style="left:388px;top:667px;height:14px;line-height:14px;color:#e6e6e6;font-size:12px;">94</div>
<svg class="a" style="left:21px;top:693px;" width="10" height="10" viewBox="0 0 10 10"><circle cx="5" cy="5" r="4" fill="none" stroke="#6a6a6a" stroke-width="1.2"/></svg>
<div class="a" style="left:37px;top:691px;width:14px;height:14px;background:#555;border-radius:2px;"></div>
<div class="a t" style="left:40px;top:692px;height:14px;line-height:14px;color:#ddd;font-size:11px;">5</div>
<div class="a t" style="left:53px;top:692px;height:14px;line-height:14px;color:#e0e0e0;font-size:11px;font-style:italic;">Hot Pink</div>
<div class="a" style="left:172px;top:691px;width:92px;height:14px;background:#fd4fbf;border-radius:3px;"></div>
<div class="a" style="left:271px;top:690px;width:94px;height:16px;background:#2a2a2a;border-radius:2px;"></div>
<div class="a t" style="left:275px;top:692px;height:14px;line-height:14px;color:#6a6a6a;font-size:12px;">#</div>
<div class="a t" style="left:288px;top:692px;height:14px;line-height:14px;color:#e6e6e6;font-size:12px;">fd4fbf</div>
<div class="a" style="left:371px;top:690px;width:94px;height:16px;background:#2a2a2a;border-radius:2px;"></div>
<div class="a t" style="left:375px;top:692px;height:14px;line-height:14px;color:#6a6a6a;font-size:12px;">A</div>
<div class="a t" style="left:388px;top:692px;height:14px;line-height:14px;color:#e6e6e6;font-size:12px;">255</div>
<div class="a" style="left:171px;top:709px;width:94px;height:16px;background:#2a2a2a;border-radius:2px;"></div>
<div class="a t" style="left:175px;top:711px;height:14px;line-height:14px;color:#6a6a6a;font-size:12px;">R</div>
<div class="a t" style="left:188px;top:711px;height:14px;line-height:14px;color:#e6e6e6;font-size:12px;">253</div>
<div class="a" style="left:271px;top:709px;width:94px;height:16px;background:#2a2a2a;border-radius:2px;"></div>
<div class="a t" style="left:275px;top:711px;height:14px;line-height:14px;color:#6a6a6a;font-size:12px;">G</div>
<div class="a t" style="left:288px;top:711px;height:14px;line-height:14px;color:#e6e6e6;font-size:12px;">79</div>
<div class="a" style="left:371px;top:709px;width:94px;height:16px;background:#2a2a2a;border-radius:2px;"></div>
<div class="a t" style="left:375px;top:711px;height:14px;line-height:14px;color:#6a6a6a;font-size:12px;">B</div>
<div class="a t" style="left:388px;top:711px;height:14px;line-height:14px;color:#e6e6e6;font-size:12px;">191</div>
<div class="a" style="left:6px;top:351px;width:2px;height:382px;background:#2ecc71;"></div>
<div class="a" style="left:470px;top:328px;width:4px;height:23px;background:#6ee0a2;"></div>
<div class="a" style="left:474px;top:327px;width:2px;height:699px;background:#2a2a2a;"></div>
<div class="a" style="left:494px;top:85px;width:30px;height:495px;background:#444;"></div>
<div class="a" style="left:504px;top:89px;width:2px;height:2px;background:#999;"></div>
<div class="a" style="left:509px;top:89px;width:2px;height:2px;background:#999;"></div>
<div class="a" style="left:514px;top:89px;width:2px;height:2px;background:#999;"></div>
<div class="a" style="left:495px;top:96px;width:28px;height:28px;background:#141414;border-radius:4px;"></div>
<svg class="a" style="left:495px;top:96px;" width="28" height="28" viewBox="0 0 28 28"><path d="M10 7 L21 18 L16.5 18.5 L19 23.5 L16.5 24.7 L14 19.7 L10.5 23 Z" fill="none" stroke="#2ecc71" stroke-width="1.3" stroke-linejoin="round"/></svg>
<svg class="a" style="left:495px;top:125px;" width="28" height="28" viewBox="0 0 28 28"><path d="M9 5 L23 18.5 L14.5 18.2 L9 25 Z" fill="#e0e0e0"/></svg>
<svg class="a" style="left:495px;top:155px;" width="28" height="28" viewBox="0 0 28 28"><path d="M6 6.5 L15.5 9 L20 14.5 L14.5 20 L9 15.5 Z" fill="#ddd"/><path d="M17 21.5 L21.5 17 L23 18.5 L18.5 23 Z" fill="#ddd"/><path d="M6.5 7 L13 13" stroke="#444" stroke-width="0.9"/><circle cx="13.3" cy="13.3" r="1.5" fill="#444"/></svg>
<svg class="a" style="left:495px;top:185px;" width="28" height="28" viewBox="0 0 28 28"><path d="M8 21 L20.5 8.5 L23.5 11.5 L11 24 Z" fill="#ddd"/><circle cx="22" cy="10" r="2.2" fill="#e8e8e8"/><path d="M8 21 L6.5 25.5 L11 24 Z" fill="#aaa"/></svg>
<svg class="a" style="left:495px;top:215px;" width="28" height="28" viewBox="0 0 28 28"><rect x="5" y="10" width="13" height="9" rx="1.5" fill="#ddd"/><path d="M18 14.5 L24 10.5 V18.5 Z" fill="#ddd"/><rect x="7" y="8" width="5" height="1" fill="#ddd"/></svg>
<svg class="a" style="left:495px;top:245px;" width="28" height="28" viewBox="0 0 28 28"><path d="M6 22 L21 8" stroke="#ccc" stroke-width="1.1"/></svg>
<svg class="a" style="left:495px;top:275px;" width="28" height="28" viewBox="0 0 28 28"><path d="M8 7 H22 V10.5 H16.8 L16.2 22 H13.8 L13.2 10.5 H8 Z" fill="#e0e0e0"/></svg>
<svg class="a" style="left:495px;top:305px;" width="28" height="28" viewBox="0 0 28 28"><path d="M6.5 6 L14 13 L8.5 13.2 L6 18 Z" fill="#ddd"/><rect x="19" y="6" width="2.2" height="2.2" fill="#ddd"/><rect x="6" y="21" width="2.2" height="2.2" fill="#ddd"/><rect x="21.5" y="21" width="2.2" height="2.2" fill="#ddd"/><path d="M12 7 H18 M20.5 9 L22.3 20 M9 22 H21" stroke="#ccc" stroke-width="0.9"/></svg>
<svg class="a" style="left:495px;top:335px;" width="28" height="28" viewBox="0 0 28 28"><rect x="7" y="8" width="14" height="14" fill="#ddd"/></svg>
<svg class="a" style="left:495px;top:365px;" width="28" height="28" viewBox="0 0 28 28"><circle cx="14" cy="15" r="8" fill="#ddd"/></svg>
<svg class="a" style="left:495px;top:395px;" width="28" height="28" viewBox="0 0 28 28"><path d="M14 6 L22 12 L19 22 H9 L6 12 Z" fill="#ddd"/></svg>
<svg class="a" style="left:495px;top:425px;" width="28" height="28" viewBox="0 0 28 28"><path d="M14 5 L16.5 11.5 L23 11.8 L18 16 L19.8 23 L14 19 L8.2 23 L10 16 L5 11.8 L11.5 11.5 Z" fill="#ddd"/></svg>
<svg class="a" style="left:495px;top:455px;" width="28" height="28" viewBox="0 0 28 28"><path d="M21 13 A6.8 6.8 0 1 0 14.2 21.5" fill="none" stroke="#ddd" stroke-width="2.8"/></svg>
<svg class="a" style="left:495px;top:485px;" width="28" height="28" viewBox="0 0 28 28"><path d="M14 6 Q15 14 22 15 Q15 16 14 24 Q13 16 6 15 Q13 14 14 6 Z" fill="#ddd"/></svg>
<svg class="a" style="left:495px;top:515px;" width="28" height="28" viewBox="0 0 28 28"><circle cx="14" cy="15" r="5" fill="none" stroke="#ddd" stroke-width="4"/><path d="M14 6 V9 M14 21 V24 M5 15 H8 M20 15 H23 M7.6 8.6 L9.8 10.8 M18.2 19.2 L20.4 21.4 M7.6 21.4 L9.8 19.2 M18.2 10.8 L20.4 8.6" stroke="#ddd" stroke-width="3"/></svg>
<svg class="a" style="left:500px;top:564px;" width="16" height="12" viewBox="0 0 16 12"><path d="M2 1 L7 6 L2 11 M8 1 L13 6 L8 11" fill="none" stroke="#bbb" stroke-width="1.1"/></svg>
<div class="a" style="left:530px;top:85px;width:1057px;height:22px;background:#1b1b1b;"></div>
<div class="a" style="left:530px;top:85px;width:88px;height:22px;background:#444;border-radius:3px 3px 0 0;"></div>
<div class="a t" style="left:535px;top:90px;height:14px;line-height:14px;color:#e6e6e6;font-size:12px;">Composition 3</div>
<div class="a" style="left:530px;top:107px;width:1057px;height:451px;background:#000;"></div>
<div class="a" style="left:694px;top:127px;width:728px;height:410px;background:#00aeff;"></div>
<div class="a" style="left:1013px;top:286px;width:91px;height:91px;background:#55fd77;border-radius:50%;"></div>
<div class="a t" style="left:1049px;top:317px;height:30px;line-height:30px;color:#ffffff;font-size:28.5px;-webkit-text-stroke:0.5px #fff;transform:scaleX(1.2);transform-origin:0 0;">0</div>
<div class="a t" style="left:570px;top:460px;height:14px;line-height:14px;font-size:11.6px;color:#f0f0f0;">Hold S <span style="color:rgba(150,150,150,0.55)">Direct Layer Selection</span></div>
<div class="a t" style="left:570px;top:474px;height:14px;line-height:14px;font-size:11.6px;color:#f0f0f0;">Space <span style="color:rgba(150,150,150,0.55)">Play/ Stop</span></div>
<div class="a t" style="left:570px;top:488px;height:14px;line-height:14px;font-size:11.6px;color:#f0f0f0;">Space + click + drag <span style="color:rgba(150,150,150,0.55)">Pan</span></div>
<div class="a t" style="left:570px;top:502px;height:14px;line-height:14px;font-size:11.6px;color:#f0f0f0;">Alt + click + drag <span style="color:rgba(150,150,150,0.55)">Move Pivot Point</span></div>
<div class="a t" style="left:570px;top:516px;height:14px;line-height:14px;font-size:11.6px;color:#f0f0f0;">Shift <span style="color:rgba(150,150,150,0.55)">Enable Snapping</span></div>
<div class="a t" style="left:998px;top:537px;height:14px;line-height:14px;color:#f0f0f0;font-size:12px;">Viewport Quality: High</div>
<div class="a" style="left:530px;top:558px;width:1057px;height:22px;background:#454545;"></div>
<div class="a" style="left:535px;top:561px;width:78px;height:17px;background:#2a2a2a;border-radius:3px;"></div>
<div class="a t" style="left:539px;top:564px;height:14px;line-height:14px;color:#e6e6e6;font-size:12px;">38%</div>
<svg class="a" style="left:598px;top:565px;" width="11" height="8" viewBox="0 0 11 8"><path d="M1 1.5 L5.5 6 L10 1.5" stroke="#bbb" fill="none" stroke-width="1.1"/></svg>
<div class="a" style="left:866px;top:560px;width:100px;height:19px;background:#2c2c2c;border-radius:4px;border:1px solid #232323;border-top-color:#4a4a4a;"></div>
<div class="a" style="left:886px;top:561px;width:1px;height:17px;background:#222;"></div>
<div class="a" style="left:906px;top:561px;width:1px;height:17px;background:#222;"></div>
<div class="a" style="left:926px;top:561px;width:1px;height:17px;background:#222;"></div>
<div class="a" style="left:946px;top:561px;width:1px;height:17px;background:#222;"></div>
<svg class="a" style="left:866px;top:560px;" width="100" height="19" viewBox="0 0 100 19"><rect x="6" y="4.5" width="2" height="10" fill="#cfcfcf"/><path d="M14.5 4.5 V14.5 L8.5 9.5 Z" fill="#cfcfcf"/><path d="M30.5 4.5 V14.5 L24.5 9.5 Z" fill="#cfcfcf"/><rect x="32" y="4.5" width="2" height="10" fill="#cfcfcf"/><path d="M45 4.5 V14.5 L52 9.5 Z" fill="#cfcfcf"/><rect x="65" y="4.5" width="2" height="10" fill="#cfcfcf"/><path d="M68.5 4.5 V14.5 L74.5 9.5 Z" fill="#cfcfcf"/><path d="M86 4.5 V14.5 L92 9.5 Z" fill="#cfcfcf"/><rect x="92" y="4.5" width="2" height="10" fill="#cfcfcf"/></svg>
<div class="a" style="left:971px;top:560px;width:20px;height:19px;background:#2c2c2c;border-radius:4px;border:1px solid #232323;border-top-color:#4a4a4a;"></div>
<svg class="a" style="left:971px;top:560px;" width="20" height="19" viewBox="0 0 20 19"><path d="M9 6.5 H4.5 V13.5 H15.5 V9" fill="none" stroke="#cfcfcf" stroke-width="1.2"/><path d="M11 3.5 L16 6.5 L11 9.5 Z" fill="#cfcfcf"/></svg>
<div class="a" style="left:1232px;top:560px;width:37px;height:17px;background:#333;border-radius:3px;"></div>
<svg class="a" style="left:1234px;top:562px;" width="16" height="12" viewBox="0 0 16 12"><path d="M2 6 L6 2 H15 V10 H6 Z" fill="#ddd"/><circle cx="6.5" cy="6" r="1.5" fill="#333"/></svg>
<div class="a t" style="left:1256px;top:563px;height:14px;line-height:14px;color:#999;font-size:12px;">0</div>
<div class="a" style="left:1272px;top:560px;width:31px;height:19px;background:#2c2c2c;border-radius:4px;border:1px solid #232323;border-top-color:#4a4a4a;"></div>
<div class="a" style="left:1291px;top:561px;width:1px;height:17px;background:#222;"></div>
<svg class="a" style="left:1293px;top:560px;" width="14" height="19" viewBox="0 0 14 19"><path d="M5 6 V13 L9.5 9.5 Z" fill="none" stroke="#999" stroke-width="1"/></svg>
<svg class="a" style="left:1272px;top:560px;" width="19" height="19" viewBox="0 0 19 19"><path d="M3 7 H6 L10 3.5 V15.5 L6 12 H3 Z" fill="#2ecc71"/><path d="M12 6.5 Q14 9.5 12 12.5 M14 4.5 Q17.5 9.5 14 14.5" stroke="#2ecc71" stroke-width="1.2" fill="none"/></svg>
<div class="a" style="left:1307px;top:560px;width:31px;height:19px;background:#2c2c2c;border-radius:4px;border:1px solid #232323;border-top-color:#4a4a4a;"></div>
<div class="a" style="left:1308px;top:561px;width:17px;height:17px;background:#484848;border-radius:3px 0 0 3px;"></div>
<div class="a" style="left:1325px;top:561px;width:1px;height:17px;background:#222;"></div>
<svg class="a" style="left:1327px;top:560px;" width="14" height="19" viewBox="0 0 14 19"><path d="M5 6 V13 L9.5 9.5 Z" fill="none" stroke="#999" stroke-width="1"/></svg>
<svg class="a" style="left:1307px;top:560px;" width="18" height="19" viewBox="0 0 18 19"><path d="M5 8 A4.5 4.5 0 0 1 13.5 7 L14.5 9" stroke="#ddd" stroke-width="2" fill="none"/><path d="M5 8 L7.5 14" stroke="#ddd" stroke-width="2"/></svg>
<div class="a" style="left:1342px;top:560px;width:31px;height:19px;background:#2c2c2c;border-radius:4px;border:1px solid #232323;border-top-color:#4a4a4a;"></div>
<div class="a" style="left:1343px;top:561px;width:18px;height:17px;background:#3a3a3a;border-radius:3px 0 0 3px;"></div>
<div class="a" style="left:1361px;top:561px;width:1px;height:17px;background:#222;"></div>
<svg class="a" style="left:1363px;top:560px;" width="14" height="19" viewBox="0 0 14 19"><path d="M5 6 V13 L9.5 9.5 Z" fill="none" stroke="#999" stroke-width="1"/></svg>
<svg class="a" style="left:1342px;top:560px;" width="19" height="19" viewBox="0 0 19 19"><path d="M7 3 V16 M12 3 V16 M2.5 7 H16.5 M2.5 12 H16.5" stroke="#ddd" stroke-width="1.1"/></svg>
<div class="a" style="left:1377px;top:560px;width:19px;height:19px;background:#2c2c2c;border-radius:4px;border:1px solid #232323;border-top-color:#4a4a4a;"></div>
<svg class="a" style="left:1377px;top:560px;" width="19" height="19" viewBox="0 0 19 19"><rect x="2" y="4" width="4" height="3" fill="#2ecc71"/><rect x="2" y="8.5" width="4" height="7" fill="#2ecc71"/><rect x="7.5" y="4.5" width="9" height="5" fill="none" stroke="#2ecc71" stroke-width="1.2"/><rect x="7" y="11" width="10" height="4.5" fill="#2ecc71"/></svg>
<div class="a" style="left:1400px;top:560px;width:19px;height:19px;background:#2c2c2c;border-radius:4px;border:1px solid #232323;border-top-color:#4a4a4a;"></div>
<svg class="a" style="left:1400px;top:560px;" width="19" height="19" viewBox="0 0 19 19"><path d="M2 5 L6 9.5 L2 14 Z" fill="#bbb"/><path d="M7 5 L11 9.5 L7 14 M11 5 L15 9.5 L11 14" stroke="#bbb" stroke-width="1.4" fill="none"/></svg>
<div class="a" style="left:1423px;top:560px;width:31px;height:19px;background:#2c2c2c;border-radius:4px;border:1px solid #232323;border-top-color:#4a4a4a;"></div>
<div class="a" style="left:1424px;top:561px;width:19px;height:17px;background:#444;border-radius:3px 0 0 3px;"></div>
<div class="a" style="left:1443px;top:561px;width:1px;height:17px;background:#222;"></div>
<svg class="a" style="left:1445px;top:560px;" width="14" height="19" viewBox="0 0 14 19"><path d="M5 6 V13 L9.5 9.5 Z" fill="none" stroke="#999" stroke-width="1"/></svg>
<svg class="a" style="left:1423px;top:560px;" width="20" height="19" viewBox="0 0 20 19"><rect x="2.5" y="4.5" width="14" height="11" fill="#444" stroke="#ddd" stroke-width="1.1"/><rect x="2" y="13" width="15" height="3" fill="#ddd"/></svg>
<div class="a" style="left:1458px;top:560px;width:31px;height:19px;background:#2c2c2c;border-radius:4px;border:1px solid #232323;border-top-color:#4a4a4a;"></div>
<div class="a" style="left:1459px;top:561px;width:18px;height:17px;background:#444;border-radius:3px 0 0 3px;"></div>
<div class="a" style="left:1477px;top:561px;width:1px;height:17px;background:#222;"></div>
<svg class="a" style="left:1479px;top:560px;" width="14" height="19" viewBox="0 0 14 19"><path d="M5 6 V13 L9.5 9.5 Z" fill="none" stroke="#999" stroke-width="1"/></svg>
<svg class="a" style="left:1458px;top:560px;" width="19" height="19" viewBox="0 0 19 19"><rect x="2.5" y="3.5" width="8" height="6" fill="none" stroke="#ddd"/><path d="M11 6 H12.5 V11.5 H4.5 M13.5 8 H14.5 V13.5 H6.5 M15.5 10 H16.5 V15.5 H8.5" fill="none" stroke="#aaa" stroke-width="0.8"/></svg>
<div class="a" style="left:1493px;top:560px;width:31px;height:19px;background:#2c2c2c;border-radius:4px;border:1px solid #232323;border-top-color:#4a4a4a;"></div>
<div class="a" style="left:1494px;top:561px;width:19px;height:17px;background:#444;border-radius:3px 0 0 3px;"></div>
<div class="a" style="left:1513px;top:561px;width:1px;height:17px;background:#222;"></div>
<svg class="a" style="left:1515px;top:560px;" width="14" height="19" viewBox="0 0 14 19"><path d="M5 6 V13 L9.5 9.5 Z" fill="none" stroke="#999" stroke-width="1"/></svg>
<svg class="a" style="left:1493px;top:560px;" width="20" height="19" viewBox="0 0 20 19"><rect x="2" y="3" width="9" height="8" fill="#ddd"/><rect x="7.5" y="8.5" width="8" height="8" fill="#444" stroke="#ddd" stroke-width="1.1"/></svg>
<div class="a" style="left:1528px;top:560px;width:31px;height:19px;background:#2c2c2c;border-radius:4px;border:1px solid #232323;border-top-color:#4a4a4a;"></div>
<div class="a" style="left:1547px;top:561px;width:1px;height:17px;background:#222;"></div>
<svg class="a" style="left:1549px;top:560px;" width="14" height="19" viewBox="0 0 14 19"><path d="M5 6 V13 L9.5 9.5 Z" fill="none" stroke="#999" stroke-width="1"/></svg>
<svg class="a" style="left:1528px;top:560px;" width="19" height="19" viewBox="0 0 19 19"><rect x="3" y="3" width="3" height="3" fill="#2ecc71"/><rect x="3" y="9" width="3" height="3" fill="#2ecc71"/><rect x="6" y="6" width="3" height="3" fill="#2ecc71"/><rect x="6" y="12" width="3" height="3" fill="#2ecc71"/><rect x="9" y="3" width="3" height="3" fill="#2ecc71"/><rect x="9" y="9" width="3" height="3" fill="#2ecc71"/><rect x="12" y="6" width="3" height="3" fill="#2ecc71"/><rect x="12" y="12" width="3" height="3" fill="#2ecc71"/></svg>
<div class="a" style="left:1563px;top:560px;width:20px;height:19px;background:#2c2c2c;border-radius:4px;border:1px solid #232323;border-top-color:#4a4a4a;"></div>
<svg class="a" style="left:1563px;top:560px;" width="20" height="19" viewBox="0 0 20 19"><circle cx="10" cy="9.5" r="3.5" fill="none" stroke="#ddd" stroke-width="2.6"/><path d="M10 3 V5 M10 14 V16 M3.5 9.5 H5.5 M14.5 9.5 H16.5 M5.4 4.9 L6.8 6.3 M13.2 12.7 L14.6 14.1 M5.4 14.1 L6.8 12.7 M13.2 6.3 L14.6 4.9" stroke="#ddd" stroke-width="2.2"/></svg>
<div class="a" style="left:1587px;top:107px;width:6px;height:473px;background:#1b1b1b;"></div>
<div class="a" style="left:1593px;top:85px;width:321px;height:22px;background:#1b1b1b;"></div>
<div class="a" style="left:1593px;top:85px;width:40px;height:22px;background:#444;border-radius:3px 3px 0 0;"></div>
<div class="a" style="left:1633px;top:85px;width:70px;height:22px;background:#262626;border-radius:3px 3px 0 0;"></div>
<div class="a t" style="left:1598px;top:90px;height:14px;line-height:14px;color:#e6e6e6;font-size:12px;">Color</div>
<div class="a t" style="left:1639px;top:90px;height:14px;line-height:14px;color:#e6e6e6;font-size:12px;">Add Layers</div>
<div class="a" style="left:1593px;top:107px;width:321px;height:377px;background:#454545;"></div>
<div class="a" style="left:1900px;top:107px;width:14px;height:377px;background:#3a3a3a;"></div>
<div class="a" style="left:1902px;top:153px;width:10px;height:302px;background:#555;border-radius:5px;"></div>
<div class="a" style="left:1593px;top:107px;width:307px;height:160px;overflow:hidden;"><div class="a" style="left:53px;top:-47px;width:200px;height:200px;border-radius:50%;background:conic-gradient(from 90deg,#ff0000,#ff00ff,#0000ff,#00ffff,#00ff00,#ffff00,#ff0000);"></div><div class="a" style="left:78px;top:-22px;width:150px;height:150px;border-radius:50%;background:#454545;"></div></div>
<div class="a" style="left:1702px;top:116px;width:90px;height:90px;background:linear-gradient(to right,#000,rgba(0,0,0,0)),linear-gradient(to bottom,#fff,#ff00b0);"></div>
<svg class="a" style="left:1784px;top:171px;" width="14" height="14" viewBox="0 0 14 14"><circle cx="7" cy="7" r="5.5" fill="none" stroke="#eee" stroke-width="1"/></svg>
<svg class="a" style="left:1806px;top:207px;" width="14" height="14" viewBox="0 0 14 14"><circle cx="7" cy="7" r="5.5" fill="none" stroke="#eee" stroke-width="1"/></svg>
<div class="a" style="left:1600px;top:273px;width:22px;height:22px;background:#fd4fbf;border-radius:3px;"></div>
<div class="a t" style="left:1625px;top:279px;height:14px;line-height:14px;color:#e6e6e6;font-size:12px;">Hot Pink</div>
<div class="a" style="left:1870px;top:273px;width:22px;height:22px;background:#2c2c2c;border-radius:4px;border:1px solid #232323;"></div>
<svg class="a" style="left:1873px;top:276px;" width="16" height="16" viewBox="0 0 16 16"><path d="M3 13 L10 6" stroke="#ccc" stroke-width="2.2"/><path d="M3.6 12.4 L9.4 6.6" stroke="#2c2c2c" stroke-width="0.9"/><circle cx="11.5" cy="4.5" r="2.5" fill="#ccc"/><path d="M8 5.5 L10.5 8" stroke="#ccc" stroke-width="1.6"/></svg>
<div class="a" style="left:1600px;top:300px;width:49px;height:18px;background:#454545;border-radius:3px;border:1px solid #333;"></div>
<div class="a t" style="left:1603px;top:303px;height:14px;line-height:14px;color:#e6e6e6;font-size:12px;">Hex</div>
<svg class="a" style="left:1636px;top:305px;" width="10" height="8" viewBox="0 0 10 8"><path d="M1 1.5 L5 5.5 L9 1.5" stroke="#bbb" fill="none"/></svg>
<div class="a" style="left:1653px;top:298px;width:239px;height:22px;background:#262626;border-radius:2px;"></div>
<div class="a t" style="left:1657px;top:303px;height:14px;line-height:14px;color:#555;font-size:11px;">#</div>
<div class="a t" style="left:1670px;top:303px;height:14px;line-height:14px;color:#e6e6e6;font-size:12px;">fd4fbf</div>
<div class="a" style="left:1600px;top:330px;width:238px;height:5px;background:#e8e8e8;border-radius:3px;"></div>
<svg class="a" style="left:1826px;top:325px;" width="15" height="15" viewBox="0 0 15 15"><circle cx="7.5" cy="7.5" r="5.5" fill="#6cc4a8"/><circle cx="7.5" cy="7.5" r="1.6" fill="#4a9a80"/></svg>
<div class="a" style="left:1849px;top:324px;width:43px;height:17px;background:#2a2a2a;border-radius:2px;"></div>
<div class="a t" style="left:1853px;top:327px;height:14px;line-height:14px;color:#555;font-size:12px;">A</div>
<div class="a t" style="left:1866px;top:327px;height:14px;line-height:14px;color:#e6e6e6;font-size:12px;">255</div>
<div class="a" style="left:1597px;top:345px;width:297px;height:23px;background:#262626;"></div>
<div class="a" style="left:1599px;top:348px;width:148px;height:20px;background:#454545;border-radius:3px 3px 0 0;"></div>
<div class="a t" style="left:1648px;top:352px;height:14px;line-height:14px;color:#e6e6e6;font-size:12px;">Swatches</div>
<div class="a t" style="left:1792px;top:352px;height:14px;line-height:14px;color:#bdbdbd;font-size:12px;">Generator</div>
<div class="a" style="left:1599px;top:371px;width:255px;height:18px;background:#585858;border-radius:3px;"></div>
<div class="a" style="left:1600px;top:372px;width:61px;height:16px;background:#262626;border-radius:3px;"></div>
<svg class="a" style="left:1604px;top:374px;" width="12" height="12" viewBox="0 0 12 12"><path d="M1.5 1 V11 M4.5 1 V11" stroke="#2ecc71" stroke-width="1.6"/><path d="M7 1 L10 11" stroke="#2ecc71" stroke-width="1.6"/></svg>
<div class="a t" style="left:1621px;top:375px;height:14px;line-height:14px;color:#e6e6e6;font-size:12px;">Library</div>
<svg class="a" style="left:1670px;top:374px;" width="14" height="12" viewBox="0 0 14 12"><path d="M1 1 H6 V2 H1Z" fill="#ccc"/><rect x="1" y="2" width="11" height="9" fill="#ccc"/><path d="M3 5 H10 M3 7 H10 M3 9 H10" stroke="#585858" stroke-width="0.8"/></svg>
<div class="a t" style="left:1686px;top:375px;height:14px;line-height:14px;color:#e6e6e6;font-size:12px;">Project</div>
<svg class="a" style="left:1737px;top:374px;" width="10" height="13" viewBox="0 0 10 13"><path d="M1 1 H6 L9 4 V12 H1 Z" fill="none" stroke="#ccc" stroke-width="1"/></svg>
<div class="a t" style="left:1752px;top:375px;height:14px;line-height:14px;color:#e6e6e6;font-size:12px;">Scene</div>
<svg class="a" style="left:1800px;top:374px;" width="12" height="12" viewBox="0 0 12 12"><path d="M2 1 H9 L11 4 V9 L7 11 H2 Z" fill="none" stroke="#ccc" stroke-width="1"/></svg>
<div class="a t" style="left:1815px;top:375px;height:14px;line-height:14px;color:#e6e6e6;font-size:12px;">Labels</div>
<div class="a" style="left:1858px;top:371px;width:36px;height:18px;background:#585858;border-radius:3px;"></div>
<div class="a" style="left:1859px;top:372px;width:17px;height:16px;background:#262626;border-radius:3px;"></div>
<svg class="a" style="left:1861px;top:374px;" width="12" height="12" viewBox="0 0 12 12"><rect x="2" y="2" width="3.5" height="3.5" fill="#2ecc71"/><rect x="7" y="2" width="3.5" height="3.5" fill="#2ecc71"/><rect x="2" y="7" width="3.5" height="3.5" fill="#2ecc71"/><rect x="7" y="7" width="3.5" height="3.5" fill="#2ecc71"/></svg>
<svg class="a" style="left:1879px;top:374px;" width="13" height="12" viewBox="0 0 13 12"><path d="M1 2.5 H12 M1 6 H12 M1 9.5 H12" stroke="#ddd" stroke-width="1.1"/></svg>
<div class="a" style="left:1599px;top:392px;width:274px;height:17px;background:#555;border-radius:3px;"></div>
<div class="a t" style="left:1601px;top:395px;height:14px;line-height:14px;color:#e6e6e6;font-size:12px;">new</div>
<svg class="a" style="left:1859px;top:397px;" width="11" height="8" viewBox="0 0 11 8"><path d="M1 1.5 L5.5 6 L10 1.5" stroke="#bbb" fill="none" stroke-width="1.1"/></svg>
<div class="a" style="left:1881px;top:400px;width:2px;height:2px;background:#ccc;"></div>
<div class="a" style="left:1885px;top:400px;width:2px;height:2px;background:#ccc;"></div>
<div class="a" style="left:1889px;top:400px;width:2px;height:2px;background:#ccc;"></div>
<div class="a" style="left:1598px;top:410px;width:296px;height:74px;background:#262626;"></div>
<div class="a" style="left:1895px;top:410px;width:4px;height:74px;background:#555;"></div>
<div class="a" style="left:1600px;top:412px;width:18px;height:18px;background:#8b4ffd;border-radius:3px;"></div>
<div class="a" style="left:1622px;top:412px;width:18px;height:18px;background:#4fa0fd;border-radius:3px;"></div>
<div class="a" style="left:1644px;top:412px;width:18px;height:18px;background:#fd724f;border-radius:3px;"></div>
<div class="a" style="left:1666px;top:412px;width:18px;height:18px;background:#4ffdb3;border-radius:3px;"></div>
<div class="a" style="left:1688px;top:412px;width:18px;height:18px;background:#fd4f5e;border-radius:3px;"></div>
<div class="a" style="left:1710px;top:412px;width:18px;height:18px;background:#fd4fbf;border-radius:3px;"></div>
<div class="a" style="left:1593px;top:490px;width:321px;height:22px;background:#1b1b1b;"></div>
<div class="a" style="left:1593px;top:490px;width:40px;height:22px;background:#454545;border-radius:3px 3px 0 0;"></div>
<div class="a t" style="left:1598px;top:495px;height:14px;line-height:14px;color:#e6e6e6;font-size:12px;">Align</div>
<div class="a" style="left:1593px;top:512px;width:321px;height:68px;background:#454545;"></div>
<div class="a t" style="left:1601px;top:525px;height:14px;line-height:14px;color:#e6e6e6;font-size:12px;">Alignment</div>
<div class="a t" style="left:1601px;top:553px;height:14px;line-height:14px;color:#e6e6e6;font-size:12px;">Distribution</div>
<div class="a" style="left:1790px;top:522px;width:54px;height:18px;background:#2c2c2c;border-radius:4px;border:1px solid #1e1e1e;"></div>
<div class="a" style="left:1808px;top:523px;width:1px;height:16px;background:#1e1e1e;"></div>
<div class="a" style="left:1826px;top:523px;width:1px;height:16px;background:#1e1e1e;"></div>
<svg class="a" style="left:1790px;top:522px;" width="18" height="18" viewBox="0 0 18 18"><path d="M3 3 V15" stroke="#e0e0e0"/><rect x="5" y="5" width="5" height="2" fill="#e0e0e0"/><rect x="5" y="10" width="9" height="2" fill="#e0e0e0"/></svg>
<svg class="a" style="left:1808px;top:522px;" width="18" height="18" viewBox="0 0 18 18"><path d="M9 2 V16" stroke="#e0e0e0"/><rect x="6" y="5" width="6" height="2" fill="#e0e0e0"/><rect x="4" y="10" width="10" height="2" fill="#e0e0e0"/></svg>
<svg class="a" style="left:1826px;top:522px;" width="18" height="18" viewBox="0 0 18 18"><path d="M15 3 V15" stroke="#e0e0e0"/><rect x="8" y="5" width="5" height="2" fill="#e0e0e0"/><rect x="4" y="10" width="9" height="2" fill="#e0e0e0"/></svg>
<div class="a" style="left:1852px;top:522px;width:54px;height:18px;background:#2c2c2c;border-radius:4px;border:1px solid #1e1e1e;"></div>
<div class="a" style="left:1870px;top:523px;width:1px;height:16px;background:#1e1e1e;"></div>
<div class="a" style="left:1888px;top:523px;width:1px;height:16px;background:#1e1e1e;"></div>
<svg class="a" style="left:1852px;top:522px;" width="18" height="18" viewBox="0 0 18 18"><path d="M3 3 H15" stroke="#e0e0e0"/><rect x="5" y="5" width="2" height="9" fill="#e0e0e0"/><rect x="10" y="5" width="2" height="5" fill="#e0e0e0"/></svg>
<svg class="a" style="left:1870px;top:522px;" width="18" height="18" viewBox="0 0 18 18"><path d="M2 9 H16" stroke="#e0e0e0"/><rect x="5" y="4" width="2" height="10" fill="#e0e0e0"/><rect x="10" y="6" width="2" height="6" fill="#e0e0e0"/></svg>
<svg class="a" style="left:1888px;top:522px;" width="18" height="18" viewBox="0 0 18 18"><path d="M3 15 H15" stroke="#e0e0e0"/><rect x="5" y="9" width="2" height="5" fill="#e0e0e0"/><rect x="10" y="4" width="2" height="10" fill="#e0e0e0"/></svg>
<div class="a" style="left:1790px;top:550px;width:54px;height:18px;background:#2c2c2c;border-radius:4px;border:1px solid #1e1e1e;"></div>
<div class="a" style="left:1808px;top:551px;width:1px;height:16px;background:#1e1e1e;"></div>
<div class="a" style="left:1826px;top:551px;width:1px;height:16px;background:#1e1e1e;"></div>
<svg class="a" style="left:1790px;top:550px;" width="18" height="18" viewBox="0 0 18 18"><path d="M3 3 V15 M15 3 V15" stroke="#e0e0e0"/><rect x="8" y="5" width="2" height="8" fill="#e0e0e0"/></svg>
<svg class="a" style="left:1808px;top:550px;" width="18" height="18" viewBox="0 0 18 18"><path d="M3 3 H15 M3 15 H15" stroke="#e0e0e0"/><rect x="5" y="8" width="8" height="2" fill="#e0e0e0"/></svg>
<svg class="a" style="left:1826px;top:550px;" width="18" height="18" viewBox="0 0 18 18"><path d="M3 5 V3 H5 M13 3 H15 V5 M3 13 V15 H5 M13 15 H15 V13" stroke="#e0e0e0" fill="none"/><rect x="6" y="9" width="2" height="3" fill="#e0e0e0"/><rect x="10" y="6" width="2" height="3" fill="#e0e0e0"/></svg>
<div class="a" style="left:494px;top:586px;width:1420px;height:22px;background:#1b1b1b;"></div>
<div class="a" style="left:494px;top:586px;width:89px;height:22px;background:#444;border-radius:3px 3px 0 0;"></div>
<div class="a" style="left:585px;top:586px;width:99px;height:22px;background:#262626;border-radius:3px 3px 0 0;"></div>
<div class="a" style="left:686px;top:586px;width:102px;height:22px;background:#262626;border-radius:3px 3px 0 0;"></div>
<div class="a t" style="left:499px;top:591px;height:14px;line-height:14px;color:#e6e6e6;font-size:12px;">Scene Window</div>
<div class="a t" style="left:590px;top:591px;height:14px;line-height:14px;color:#e6e6e6;font-size:12px;">JavaScript Editor</div>
<div class="a t" style="left:691px;top:591px;height:14px;line-height:14px;color:#e6e6e6;font-size:12px;">Dependency Graph</div>
<div class="a" style="left:494px;top:608px;width:1420px;height:1px;background:#2ecc71;"></div>
<div class="a" style="left:494px;top:609px;width:1420px;height:21px;background:#262626;"></div>
<div class="a t" style="left:685px;top:613px;height:14px;line-height:14px;color:#bdbdbd;font-size:12px;">Composition 1</div>
<svg class="a" style="left:951px;top:615px;" width="10" height="10" viewBox="0 0 10 10"><path d="M1 1 L9 9 M9 1 L1 9" stroke="#aaa" stroke-width="1"/></svg>
<div class="a" style="left:969px;top:614px;width:1px;height:12px;background:#aaa;"></div>
<div class="a t" style="left:1155px;top:613px;height:14px;line-height:14px;color:#bdbdbd;font-size:12px;">Composition 2</div>
<svg class="a" style="left:1421px;top:615px;" width="10" height="10" viewBox="0 0 10 10"><path d="M1 1 L9 9 M9 1 L1 9" stroke="#aaa" stroke-width="1"/></svg>
<div class="a" style="left:1439px;top:610px;width:469px;height:20px;background:#444;border-radius:4px 4px 0 0;"></div>
<div class="a t" style="left:1625px;top:613px;height:14px;line-height:14px;color:#e6e6e6;font-size:12px;">Composition 3</div>
<svg class="a" style="left:1891px;top:615px;" width="10" height="10" viewBox="0 0 10 10"><path d="M1 1 L9 9 M9 1 L1 9" stroke="#aaa" stroke-width="1"/></svg>
<div class="a" style="left:494px;top:630px;width:490px;height:22px;background:#3b3b3b;"></div>
<div class="a" style="left:496px;top:632px;width:282px;height:20px;background:#262626;border-radius:10px;"></div>
<svg class="a" style="left:500px;top:636px;" width="12" height="12" viewBox="0 0 12 12"><circle cx="5" cy="5" r="4" fill="none" stroke="#ddd" stroke-width="1.3"/><path d="M8 8 L11 11" stroke="#ddd" stroke-width="1.8"/></svg>
<div class="a t" style="left:520px;top:636px;height:14px;line-height:14px;color:#8a8a8a;font-size:11.5px;">Enter a layer name</div>
<div class="a" style="left:779px;top:633px;width:19px;height:19px;background:#2c2c2c;border-radius:4px;border:1px solid #222;border-top-color:#484848;"></div>
<svg class="a" style="left:779px;top:633px;" width="19" height="19" viewBox="0 0 19 19"><path d="M9.5 4 V15 M4 9.5 H15" stroke="#eee" stroke-width="1.8"/></svg>
<svg class="a" style="left:793px;top:647px;" width="4" height="4" viewBox="0 0 4 4"><path d="M0 4 L4 0 V4 Z" fill="#6cc4a8"/></svg>
<div class="a" style="left:822px;top:633px;width:19px;height:19px;background:#2c2c2c;border-radius:4px;border:1px solid #222;border-top-color:#484848;"></div>
<svg class="a" style="left:822px;top:633px;" width="19" height="19" viewBox="0 0 19 19"><circle cx="11.5" cy="7" r="4" fill="#ddd"/><path d="M5 14 A5 5 0 0 1 8 8" stroke="#777" stroke-width="1.5" fill="none"/><path d="M4 12 A5 5 0 0 1 6 7" stroke="#666" stroke-width="1.2" fill="none"/></svg>
<div class="a" style="left:844px;top:633px;width:19px;height:19px;background:#2c2c2c;border-radius:4px;border:1px solid #222;border-top-color:#484848;"></div>
<svg class="a" style="left:844px;top:633px;" width="19" height="19" viewBox="0 0 19 19"><circle cx="5" cy="5" r="1.2" fill="#ddd"/><circle cx="12" cy="5" r="1.2" fill="#ddd"/><circle cx="5" cy="11" r="1.2" fill="#ddd"/><path d="M12 8 V15 M8.5 11.5 H15.5" stroke="#ddd" stroke-width="1.5"/></svg>
<svg class="a" style="left:858px;top:647px;" width="4" height="4" viewBox="0 0 4 4"><path d="M0 4 L4 0 V4 Z" fill="#6cc4a8"/></svg>
<div class="a" style="left:866px;top:633px;width:19px;height:19px;background:#2c2c2c;border-radius:4px;border:1px solid #222;border-top-color:#484848;"></div>
<svg class="a" style="left:866px;top:633px;" width="19" height="19" viewBox="0 0 19 19"><path d="M3 5 H16 M3 9.5 H16 M3 14 H16" stroke="#ddd" stroke-width="1" stroke-dasharray="2 1.5"/><circle cx="9" cy="5" r="1.6" fill="#2c2c2c" stroke="#ddd"/><circle cx="11" cy="9.5" r="1.6" fill="#2c2c2c" stroke="#ddd"/><circle cx="8" cy="14" r="1.6" fill="#2c2c2c" stroke="#ddd"/></svg>
<svg class="a" style="left:880px;top:647px;" width="4" height="4" viewBox="0 0 4 4"><path d="M0 4 L4 0 V4 Z" fill="#6cc4a8"/></svg>
<div class="a" style="left:888px;top:632px;width:94px;height:20px;background:#2a2a2a;border-radius:3px;"></div>
<div class="a t" style="left:893px;top:636px;height:14px;line-height:14px;color:#555;font-size:12px;">F</div>
<div class="a t" style="left:905px;top:636px;height:14px;line-height:14px;color:#e6e6e6;font-size:12px;">107</div>
<div class="a" style="left:494px;top:652px;width:490px;height:20px;background:#444;"></div>
<svg class="a" style="left:499px;top:655px;" width="12" height="14" viewBox="0 0 12 14"><rect x="1.8" y="5.5" width="8.4" height="7.5" rx="0.8" fill="#cfcfcf"/><path d="M3.5 5.5 V4 A2.5 2.5 0 0 1 8.5 4 V5.5" stroke="#cfcfcf" stroke-width="1.3" fill="none"/><rect x="5.3" y="8.5" width="1.5" height="1.5" fill="#444"/></svg>
<svg class="a" style="left:516px;top:657px;" width="16" height="11" viewBox="0 0 16 11"><path d="M1 5.5 Q8 -1 15 5.5 Q8 12 1 5.5 Z" fill="none" stroke="#cfcfcf" stroke-width="1.1"/><circle cx="8" cy="5.5" r="2.3" fill="#cfcfcf"/></svg>
<svg class="a" style="left:536px;top:655px;" width="14" height="15" viewBox="0 0 14 15"><path d="M7 1 L13 4 V11 L7 14 L1 11 V4 Z M1 4 L7 7 L13 4 M7 7 V14" fill="none" stroke="#cfcfcf" stroke-width="1"/></svg>
<svg class="a" style="left:555px;top:655px;" width="15" height="15" viewBox="0 0 15 15"><path d="M1 5 H4 L8 1.5 V13.5 L4 10 H1 Z" fill="#cfcfcf"/><path d="M10 4.5 Q12 7.5 10 10.5 M12 2.5 Q15.5 7.5 12 12.5" stroke="#cfcfcf" stroke-width="1.1" fill="none"/></svg>
<svg class="a" style="left:574px;top:655px;" width="14" height="14" viewBox="0 0 14 14"><path d="M2 12 L9 5" stroke="#cfcfcf" stroke-width="2.2"/><path d="M2.6 11.4 L8.4 5.6" stroke="#444" stroke-width="0.9"/><circle cx="10.5" cy="3.5" r="2.3" fill="#cfcfcf"/><path d="M7 4.5 L9.5 7" stroke="#cfcfcf" stroke-width="1.5"/></svg>
<svg class="a" style="left:592px;top:656px;" width="16" height="12" viewBox="0 0 16 12"><path d="M1 6 L5 2 H15 V10 H5 Z" fill="#cfcfcf"/><circle cx="5.5" cy="6" r="1.6" fill="#3a3a3a"/></svg>
<div class="a t" style="left:649px;top:657px;height:14px;line-height:14px;color:#e6e6e6;font-size:12px;">Name</div>
<div class="a" style="left:494px;top:672px;width:490px;height:292px;background:#2a2a2a;"></div>
<div class="a" style="left:494px;top:672px;width:477px;height:155px;background:#353535;"></div>
<div class="a" style="left:496px;top:673px;width:472px;height:21px;background:#454f48;border-radius:3px;"></div>
<div class="a" style="left:496px;top:674px;width:17px;height:19px;background:#282828;border-radius:2px;"></div>
<div class="a" style="left:515px;top:674px;width:18px;height:19px;background:#282828;border-radius:2px;"></div>
<svg class="a" style="left:517px;top:677px;" width="14" height="14" viewBox="0 0 14 14"><path d="M12 5.3 A5.3 5.3 0 1 1 9.3 2.3" fill="none" stroke="#ddd" stroke-width="1.1"/><path d="M4.3 6.8 L6.8 9.3 L12.3 3" stroke="#ddd" stroke-width="1.4" fill="none"/></svg>
<div class="a" style="left:573px;top:675px;width:16px;height:16px;background:#72e09a;border-radius:3px;box-shadow:0 0 0 1px #161616;"></div>
<svg class="a" style="left:592px;top:677px;" width="16" height="12" viewBox="0 0 16 12"><path d="M1 6 L5 2 H15 V10 H5 Z" fill="#cfcfcf"/><circle cx="5.5" cy="6" r="1.6" fill="#333"/></svg>
<svg class="a" style="left:648px;top:676px;" width="17" height="16" viewBox="0 0 17 16"><path d="M1 4 H6 V8 H10 V13 H1 Z" fill="#a8d4f5"/><path d="M7 0.7 H15 M7 4 H15 M7 7.3 H15" stroke="#ddd" stroke-width="0.9"/></svg>
<div class="a t" style="left:667px;top:677px;height:14px;line-height:14px;color:#e6e6e6;font-size:12px;">Color Array</div>
<svg class="a" style="left:955px;top:678px;" width="12" height="12" viewBox="0 0 12 12"><circle cx="6" cy="6" r="4.5" fill="none" stroke="#666" stroke-width="1.1"/></svg>
<div class="a" style="left:496px;top:696px;width:17px;height:19px;background:#282828;border-radius:2px;"></div>
<div class="a" style="left:515px;top:696px;width:18px;height:19px;background:#282828;border-radius:2px;"></div>
<svg class="a" style="left:517px;top:699px;" width="14" height="14" viewBox="0 0 14 14"><path d="M12 5.3 A5.3 5.3 0 1 1 9.3 2.3" fill="none" stroke="#ddd" stroke-width="1.1"/><path d="M4.3 6.8 L6.8 9.3 L12.3 3" stroke="#ddd" stroke-width="1.4" fill="none"/></svg>
<div class="a" style="left:573px;top:697px;width:16px;height:16px;background:#c8ec7a;border-radius:3px;box-shadow:0 0 0 1px #161616;"></div>
<svg class="a" style="left:592px;top:699px;" width="16" height="12" viewBox="0 0 16 12"><path d="M1 6 L5 2 H15 V10 H5 Z" fill="#cfcfcf"/><circle cx="5.5" cy="6" r="1.6" fill="#333"/></svg>
<svg class="a" style="left:648px;top:698px;" width="17" height="16" viewBox="0 0 17 16"><path d="M0 8 C1 4.5 2.3 3 3.5 3 C5.5 3 6.5 11 8 11 C9.5 11 10.5 3 12.4 3 C14 3 15.5 7 16.6 9.5" stroke="#8fd99a" stroke-width="1.2" fill="none"/></svg>
<div class="a t" style="left:667px;top:699px;height:14px;line-height:14px;color:#e6e6e6;font-size:12px;">Oscillator [Position.Z] Cosine</div>
<svg class="a" style="left:955px;top:700px;" width="12" height="12" viewBox="0 0 12 12"><circle cx="6" cy="6" r="4.5" fill="none" stroke="#666" stroke-width="1.1"/></svg>
<div class="a" style="left:930px;top:698px;width:22px;height:16px;background:#2a2a2a;border-radius:3px;"></div>
<svg class="a" style="left:930px;top:698px;" width="22" height="16" viewBox="0 0 22 16"><path d="M4 8 L9 4.5 V11.5 Z" fill="#e2d170"/><path d="M13 4.5 V11.5 L18 8 Z" fill="#777"/></svg>
<div class="a" style="left:496px;top:718px;width:17px;height:19px;background:#282828;border-radius:2px;"></div>
<div class="a" style="left:515px;top:718px;width:18px;height:19px;background:#282828;border-radius:2px;"></div>
<svg class="a" style="left:517px;top:721px;" width="14" height="14" viewBox="0 0 14 14"><path d="M12 5.3 A5.3 5.3 0 1 1 9.3 2.3" fill="none" stroke="#ddd" stroke-width="1.1"/><path d="M4.3 6.8 L6.8 9.3 L12.3 3" stroke="#ddd" stroke-width="1.4" fill="none"/></svg>
<div class="a" style="left:573px;top:719px;width:16px;height:16px;background:#c8ec7a;border-radius:3px;box-shadow:0 0 0 1px #161616;"></div>
<svg class="a" style="left:592px;top:721px;" width="16" height="12" viewBox="0 0 16 12"><path d="M1 6 L5 2 H15 V10 H5 Z" fill="#cfcfcf"/><circle cx="5.5" cy="6" r="1.6" fill="#333"/></svg>
<svg class="a" style="left:648px;top:720px;" width="17" height="16" viewBox="0 0 17 16"><path d="M0 8 C1 4.5 2.3 3 3.5 3 C5.5 3 6.5 11 8 11 C9.5 11 10.5 3 12.4 3 C14 3 15.5 7 16.6 9.5" stroke="#8fd99a" stroke-width="1.2" fill="none"/></svg>
<div class="a t" style="left:667px;top:721px;height:14px;line-height:14px;color:#e6e6e6;font-size:12px;">Oscillator [Position.X] Sine Driver</div>
<svg class="a" style="left:955px;top:722px;" width="12" height="12" viewBox="0 0 12 12"><circle cx="6" cy="6" r="4.5" fill="none" stroke="#666" stroke-width="1.1"/></svg>
<div class="a" style="left:930px;top:720px;width:22px;height:16px;background:#2a2a2a;border-radius:3px;"></div>
<svg class="a" style="left:930px;top:720px;" width="22" height="16" viewBox="0 0 22 16"><path d="M4 8 L9 4.5 V11.5 Z" fill="#e2d170"/><path d="M13 4.5 V11.5 L18 8 Z" fill="#cc55ee"/></svg>
<div class="a" style="left:496px;top:740px;width:17px;height:19px;background:#282828;border-radius:2px;"></div>
<div class="a" style="left:515px;top:740px;width:18px;height:19px;background:#282828;border-radius:2px;"></div>
<svg class="a" style="left:517px;top:743px;" width="14" height="14" viewBox="0 0 14 14"><path d="M12 5.3 A5.3 5.3 0 1 1 9.3 2.3" fill="none" stroke="#ddd" stroke-width="1.1"/><path d="M4.3 6.8 L6.8 9.3 L12.3 3" stroke="#ddd" stroke-width="1.4" fill="none"/></svg>
<div class="a" style="left:573px;top:741px;width:16px;height:16px;background:#6691e6;border-radius:3px;box-shadow:0 0 0 1px #161616;"></div>
<svg class="a" style="left:592px;top:743px;" width="16" height="12" viewBox="0 0 16 12"><path d="M1 6 L5 2 H15 V10 H5 Z" fill="#cfcfcf"/><circle cx="5.5" cy="6" r="1.6" fill="#333"/></svg>
<svg class="a" style="left:648px;top:742px;" width="17" height="16" viewBox="0 0 17 16"><path d="M1 3 H8 L10.5 5.5 V12.5 H1 Z" fill="#a8d4f5"/><rect x="5" y="6" width="1.6" height="6.5" fill="#5a6a78"/><path d="M11.5 0.5 V4.5 M9.5 2.5 H13.5 M14 4 V7 M12.5 5.5 H15.5" stroke="#eee" stroke-width="0.9"/></svg>
<div class="a t" style="left:667px;top:743px;height:14px;line-height:14px;color:#e6e6e6;font-size:12px;">Index Context [Number]</div>
<svg class="a" style="left:955px;top:744px;" width="12" height="12" viewBox="0 0 12 12"><circle cx="6" cy="6" r="4.5" fill="none" stroke="#666" stroke-width="1.1"/></svg>
<div class="a" style="left:930px;top:742px;width:22px;height:16px;background:#2a2a2a;border-radius:3px;"></div>
<svg class="a" style="left:930px;top:742px;" width="22" height="16" viewBox="0 0 22 16"><path d="M4 8 L9 4.5 V11.5 Z" fill="#777"/><path d="M13 4.5 V11.5 L18 8 Z" fill="#cc55ee"/></svg>
<div class="a" style="left:496px;top:762px;width:17px;height:19px;background:#282828;border-radius:2px;"></div>
<div class="a" style="left:515px;top:762px;width:18px;height:19px;background:#282828;border-radius:2px;"></div>
<svg class="a" style="left:517px;top:765px;" width="14" height="14" viewBox="0 0 14 14"><path d="M12 5.3 A5.3 5.3 0 1 1 9.3 2.3" fill="none" stroke="#ddd" stroke-width="1.1"/><path d="M4.3 6.8 L6.8 9.3 L12.3 3" stroke="#ddd" stroke-width="1.4" fill="none"/></svg>
<div class="a" style="left:573px;top:763px;width:16px;height:16px;background:#6691e6;border-radius:3px;box-shadow:0 0 0 1px #161616;"></div>
<svg class="a" style="left:592px;top:765px;" width="16" height="12" viewBox="0 0 16 12"><path d="M1 6 L5 2 H15 V10 H5 Z" fill="#cfcfcf"/><circle cx="5.5" cy="6" r="1.6" fill="#333"/></svg>
<svg class="a" style="left:648px;top:765px;" width="17" height="16" viewBox="0 0 17 16"><text x="0" y="8.5" font-size="10" fill="#a8d4f5" font-family="Liberation Sans" textLength="15">abc</text><path d="M0 9.3 H15" stroke="#a8d4f5" stroke-width="0.8"/><path d="M0 12 H4 M5.5 12 H9.5 M11 12 H15" stroke="#ddd" stroke-width="1"/></svg>
<div class="a t" style="left:667px;top:765px;height:14px;line-height:14px;color:#e6e6e6;font-size:12px;">String Generator [String]</div>
<svg class="a" style="left:955px;top:766px;" width="12" height="12" viewBox="0 0 12 12"><circle cx="6" cy="6" r="4.5" fill="none" stroke="#666" stroke-width="1.1"/></svg>
<div class="a" style="left:930px;top:764px;width:22px;height:16px;background:#2a2a2a;border-radius:3px;"></div>
<svg class="a" style="left:930px;top:764px;" width="22" height="16" viewBox="0 0 22 16"><path d="M4 8 L9 4.5 V11.5 Z" fill="#e2d170"/><path d="M13 4.5 V11.5 L18 8 Z" fill="#cc55ee"/></svg>
<div class="a" style="left:496px;top:784px;width:17px;height:19px;background:#282828;border-radius:2px;"></div>
<div class="a" style="left:515px;top:784px;width:18px;height:19px;background:#282828;border-radius:2px;"></div>
<svg class="a" style="left:516px;top:789px;" width="16" height="11" viewBox="0 0 16 11"><path d="M1 5.5 Q8 -1 15 5.5 Q8 12 1 5.5 Z" fill="none" stroke="#ddd" stroke-width="1.1"/><circle cx="8" cy="5.5" r="2.3" fill="#ddd"/></svg>
<div class="a" style="left:534px;top:784px;width:18px;height:19px;background:#282828;border-radius:2px;"></div>
<div class="a" style="left:573px;top:785px;width:16px;height:16px;background:#ffe57a;border-radius:3px;box-shadow:0 0 0 1px #161616;"></div>
<svg class="a" style="left:592px;top:787px;" width="16" height="12" viewBox="0 0 16 12"><path d="M1 6 L5 2 H15 V10 H5 Z" fill="#cfcfcf"/><circle cx="5.5" cy="6" r="1.6" fill="#333"/></svg>
<div class="a" style="left:611px;top:784px;width:30px;height:19px;background:#2e2e2e;border-radius:2px;"></div>
<svg class="a" style="left:614px;top:790px;" width="9" height="7" viewBox="0 0 9 7"><path d="M1 1 L4.5 5 L8 1" stroke="#888" fill="none"/></svg>
<svg class="a" style="left:648px;top:787px;" width="17" height="16" viewBox="0 0 17 16"><path d="M3.5 1.8 H11 M3.5 11.8 H11 M1.8 3.5 V11 M11.8 3.5 V11" stroke="#e2d170" stroke-width="1"/><rect x="1" y="1" width="2" height="2" fill="#ddd"/><rect x="11" y="1" width="2" height="2" fill="#ddd"/><rect x="1" y="11" width="2" height="2" fill="#ddd"/><rect x="11" y="11" width="2" height="2" fill="#ddd"/></svg>
<div class="a t" style="left:667px;top:787px;height:14px;line-height:14px;color:#e6e6e6;font-size:12px;">Ellipse Shape</div>
<svg class="a" style="left:955px;top:788px;" width="12" height="12" viewBox="0 0 12 12"><circle cx="6" cy="6" r="4.5" fill="none" stroke="#666" stroke-width="1.1"/></svg>
<div class="a" style="left:496px;top:806px;width:17px;height:19px;background:#282828;border-radius:2px;"></div>
<div class="a" style="left:515px;top:806px;width:18px;height:19px;background:#282828;border-radius:2px;"></div>
<svg class="a" style="left:516px;top:811px;" width="16" height="11" viewBox="0 0 16 11"><path d="M1 5.5 Q8 -1 15 5.5 Q8 12 1 5.5 Z" fill="none" stroke="#ddd" stroke-width="1.1"/><circle cx="8" cy="5.5" r="2.3" fill="#ddd"/></svg>
<div class="a" style="left:534px;top:806px;width:18px;height:19px;background:#282828;border-radius:2px;"></div>
<div class="a" style="left:573px;top:807px;width:16px;height:16px;background:#b48cf7;border-radius:3px;box-shadow:0 0 0 1px #161616;"></div>
<svg class="a" style="left:592px;top:809px;" width="16" height="12" viewBox="0 0 16 12"><path d="M1 6 L5 2 H15 V10 H5 Z" fill="#cfcfcf"/><circle cx="5.5" cy="6" r="1.6" fill="#333"/></svg>
<svg class="a" style="left:666px;top:808px;" width="17" height="16" viewBox="0 0 17 16"><path d="M2 1 H14 M2 15 H14 M1 2 V14 M15 2 V14" stroke="#ddd" stroke-width="1"/><rect x="0" y="0" width="2" height="2" fill="#eee"/><rect x="14" y="0" width="2" height="2" fill="#eee"/><rect x="0" y="14" width="2" height="2" fill="#eee"/><rect x="14" y="14" width="2" height="2" fill="#eee"/><path d="M4.5 4 H11.5 V6.2 H9.1 V12 H6.9 V6.2 H4.5 Z" fill="#e2d170"/></svg>
<div class="a t" style="left:687px;top:809px;height:14px;line-height:14px;color:#e6e6e6;font-size:12px;">Cavalry</div>
<svg class="a" style="left:955px;top:810px;" width="12" height="12" viewBox="0 0 12 12"><circle cx="6" cy="6" r="4.5" fill="none" stroke="#666" stroke-width="1.1"/></svg>
<div class="a" style="left:930px;top:808px;width:22px;height:16px;background:#2a2a2a;border-radius:3px;"></div>
<svg class="a" style="left:930px;top:808px;" width="22" height="16" viewBox="0 0 22 16"><path d="M4 8 L9 4.5 V11.5 Z" fill="#e2d170"/><path d="M13 4.5 V11.5 L18 8 Z" fill="#777"/></svg>
<div class="a" style="left:544px;top:670px;width:391px;height:27px;border:3px solid #b5e61d;"></div>
<div class="a" style="left:972px;top:673px;width:10px;height:288px;background:#4a4a4a;border-radius:5px;"></div>
<div class="a" style="left:494px;top:962px;width:490px;height:14px;background:#2a2a2a;"></div>
<div class="a" style="left:495px;top:964px;width:474px;height:10px;background:#4f4f4f;border-radius:5px;"></div>
<div class="a" style="left:494px;top:976px;width:490px;height:22px;background:#3d3d3d;"></div>
<div class="a" style="left:497px;top:977px;width:19px;height:19px;background:#2c2c2c;border-radius:4px;border:1px solid #222;"></div>
<svg class="a" style="left:499px;top:980px;" width="16" height="12" viewBox="0 0 16 12"><path d="M1 6 L5 2 H15 V10 H5 Z" fill="#cfcfcf"/><circle cx="5.5" cy="6" r="1.6" fill="#2c2c2c"/></svg>
<div class="a t" style="left:521px;top:981px;height:14px;line-height:14px;color:#e6e6e6;font-size:12px;">1 selected</div>
<div class="a" style="left:776px;top:978px;width:19px;height:19px;background:#2c2c2c;border-radius:4px;border:1px solid #222;"></div>
<svg class="a" style="left:776px;top:978px;" width="19" height="19" viewBox="0 0 19 19"><rect x="4.5" y="4.5" width="10" height="10" fill="none" stroke="#ddd" stroke-width="1.1"/><circle cx="9.5" cy="9.5" r="1.6" fill="#ddd"/></svg>
<div class="a" style="left:799px;top:979px;width:182px;height:18px;background:#585858;border-radius:3px;"></div>
<div class="a" style="left:800px;top:980px;width:85px;height:16px;background:#262626;border-radius:3px;"></div>
<svg class="a" style="left:805px;top:981px;" width="14" height="14" viewBox="0 0 14 14"><path d="M2 3 H12 M4 7 H10 M2 11 H12" stroke="#2ecc71" stroke-width="2"/></svg>
<div class="a t" style="left:821px;top:981px;height:14px;line-height:14px;color:#e6e6e6;font-size:12px;">Time Editor</div>
<svg class="a" style="left:892px;top:981px;" width="14" height="14" viewBox="0 0 14 14"><path d="M2 1 V13 H13" stroke="#ccc" fill="none"/><path d="M2 12 L11 4" stroke="#ccc"/></svg>
<div class="a t" style="left:910px;top:981px;height:14px;line-height:14px;color:#e6e6e6;font-size:12px;">Graph Editor</div>
<div class="a" style="left:984px;top:630px;width:6px;height:368px;background:#1b1b1b;"></div>
<div class="a" style="left:990px;top:630px;width:924px;height:368px;background:#282828;"></div>
<div class="a" style="left:990px;top:630px;width:924px;height:24px;background:#1f1f1f;"></div>
<div class="a" style="left:990px;top:654px;width:5px;height:17px;background:#282828;"></div>
<div class="a" style="left:995px;top:654px;width:913px;height:17px;background:#444;"></div>
<svg class="a" style="left:990px;top:646px;" width="924" height="8" viewBox="0 0 924 8"><rect x="8.80" y="0" width="1.1" height="8" fill="#999"/><rect x="19.68" y="4" width="1" height="4" fill="#7a7a7a"/><rect x="30.56" y="4" width="1" height="4" fill="#7a7a7a"/><rect x="41.44" y="4" width="1" height="4" fill="#7a7a7a"/><rect x="52.32" y="4" width="1" height="4" fill="#7a7a7a"/><rect x="63.20" y="0" width="1.1" height="8" fill="#999"/><rect x="74.09" y="4" width="1" height="4" fill="#7a7a7a"/><rect x="84.97" y="4" width="1" height="4" fill="#7a7a7a"/><rect x="95.85" y="4" width="1" height="4" fill="#7a7a7a"/><rect x="106.73" y="4" width="1" height="4" fill="#7a7a7a"/><rect x="117.61" y="0" width="1.1" height="8" fill="#999"/><rect x="128.49" y="4" width="1" height="4" fill="#7a7a7a"/><rect x="139.37" y="4" width="1" height="4" fill="#7a7a7a"/><rect x="150.25" y="4" width="1" height="4" fill="#7a7a7a"/><rect x="161.13" y="4" width="1" height="4" fill="#7a7a7a"/><rect x="172.01" y="0" width="1.1" height="8" fill="#999"/><rect x="182.90" y="4" width="1" height="4" fill="#7a7a7a"/><rect x="193.78" y="4" width="1" height="4" fill="#7a7a7a"/><rect x="204.66" y="4" width="1" height="4" fill="#7a7a7a"/><rect x="215.54" y="4" width="1" height="4" fill="#7a7a7a"/><rect x="226.42" y="0" width="1.1" height="8" fill="#999"/><rect x="237.30" y="4" width="1" height="4" fill="#7a7a7a"/><rect x="248.18" y="4" width="1" height="4" fill="#7a7a7a"/><rect x="259.06" y="4" width="1" height="4" fill="#7a7a7a"/><rect x="269.94" y="4" width="1" height="4" fill="#7a7a7a"/><rect x="280.82" y="0" width="1.1" height="8" fill="#999"/><rect x="291.71" y="4" width="1" height="4" fill="#7a7a7a"/><rect x="302.59" y="4" width="1" height="4" fill="#7a7a7a"/><rect x="313.47" y="4" width="1" height="4" fill="#7a7a7a"/><rect x="324.35" y="4" width="1" height="4" fill="#7a7a7a"/><rect x="335.23" y="0" width="1.1" height="8" fill="#999"/><rect x="346.11" y="4" width="1" height="4" fill="#7a7a7a"/><rect x="356.99" y="4" width="1" height="4" fill="#7a7a7a"/><rect x="367.87" y="4" width="1" height="4" fill="#7a7a7a"/><rect x="378.75" y="4" width="1" height="4" fill="#7a7a7a"/><rect x="389.63" y="0" width="1.1" height="8" fill="#999"/><rect x="400.52" y="4" width="1" height="4" fill="#7a7a7a"/><rect x="411.40" y="4" width="1" height="4" fill="#7a7a7a"/><rect x="422.28" y="4" width="1" height="4" fill="#7a7a7a"/><rect x="433.16" y="4" width="1" height="4" fill="#7a7a7a"/><rect x="444.04" y="0" width="1.1" height="8" fill="#999"/><rect x="454.92" y="4" width="1" height="4" fill="#7a7a7a"/><rect x="465.80" y="4" width="1" height="4" fill="#7a7a7a"/><rect x="476.68" y="4" width="1" height="4" fill="#7a7a7a"/><rect x="487.56" y="4" width="1" height="4" fill="#7a7a7a"/><rect x="498.44" y="0" width="1.1" height="8" fill="#999"/><rect x="509.33" y="4" width="1" height="4" fill="#7a7a7a"/><rect x="520.21" y="4" width="1" height="4" fill="#7a7a7a"/><rect x="531.09" y="4" width="1" height="4" fill="#7a7a7a"/><rect x="541.97" y="4" width="1" height="4" fill="#7a7a7a"/><rect x="552.85" y="0" width="1.1" height="8" fill="#999"/><rect x="563.73" y="4" width="1" height="4" fill="#7a7a7a"/><rect x="574.61" y="4" width="1" height="4" fill="#7a7a7a"/><rect x="585.49" y="4" width="1" height="4" fill="#7a7a7a"/><rect x="596.37" y="4" width="1" height="4" fill="#7a7a7a"/><rect x="607.25" y="0" width="1.1" height="8" fill="#999"/><rect x="618.14" y="4" width="1" height="4" fill="#7a7a7a"/><rect x="629.02" y="4" width="1" height="4" fill="#7a7a7a"/><rect x="639.90" y="4" width="1" height="4" fill="#7a7a7a"/><rect x="650.78" y="4" width="1" height="4" fill="#7a7a7a"/><rect x="661.66" y="0" width="1.1" height="8" fill="#999"/><rect x="672.54" y="4" width="1" height="4" fill="#7a7a7a"/><rect x="683.42" y="4" width="1" height="4" fill="#7a7a7a"/><rect x="694.30" y="4" width="1" height="4" fill="#7a7a7a"/><rect x="705.18" y="4" width="1" height="4" fill="#7a7a7a"/><rect x="716.07" y="0" width="1.1" height="8" fill="#999"/><rect x="726.95" y="4" width="1" height="4" fill="#7a7a7a"/><rect x="737.83" y="4" width="1" height="4" fill="#7a7a7a"/><rect x="748.71" y="4" width="1" height="4" fill="#7a7a7a"/><rect x="759.59" y="4" width="1" height="4" fill="#7a7a7a"/><rect x="770.47" y="0" width="1.1" height="8" fill="#999"/><rect x="781.35" y="4" width="1" height="4" fill="#7a7a7a"/><rect x="792.23" y="4" width="1" height="4" fill="#7a7a7a"/><rect x="803.11" y="4" width="1" height="4" fill="#7a7a7a"/><rect x="813.99" y="4" width="1" height="4" fill="#7a7a7a"/><rect x="824.88" y="0" width="1.1" height="8" fill="#999"/><rect x="835.76" y="4" width="1" height="4" fill="#7a7a7a"/><rect x="846.64" y="4" width="1" height="4" fill="#7a7a7a"/><rect x="857.52" y="4" width="1" height="4" fill="#7a7a7a"/><rect x="868.40" y="4" width="1" height="4" fill="#7a7a7a"/><rect x="879.28" y="0" width="1.1" height="8" fill="#999"/><rect x="890.16" y="4" width="1" height="4" fill="#7a7a7a"/><rect x="901.04" y="4" width="1" height="4" fill="#7a7a7a"/><rect x="911.92" y="4" width="1" height="4" fill="#7a7a7a"/></svg>
<div class="a t" style="left:996px;top:632px;height:14px;line-height:14px;color:#e0e0e0;font-size:12px;-webkit-text-stroke:0.25px #e0e0e0;">0</div>
<div class="a t" style="left:1047px;top:632px;height:14px;line-height:14px;color:#e0e0e0;font-size:12px;-webkit-text-stroke:0.25px #e0e0e0;">15</div>
<div class="a t" style="left:1101px;top:632px;height:14px;line-height:14px;color:#e0e0e0;font-size:12px;-webkit-text-stroke:0.25px #e0e0e0;">30</div>
<div class="a t" style="left:1156px;top:632px;height:14px;line-height:14px;color:#e0e0e0;font-size:12px;-webkit-text-stroke:0.25px #e0e0e0;">45</div>
<div class="a t" style="left:1210px;top:632px;height:14px;line-height:14px;color:#e0e0e0;font-size:12px;-webkit-text-stroke:0.25px #e0e0e0;">60</div>
<div class="a t" style="left:1265px;top:632px;height:14px;line-height:14px;color:#e0e0e0;font-size:12px;-webkit-text-stroke:0.25px #e0e0e0;">75</div>
<div class="a t" style="left:1319px;top:632px;height:14px;line-height:14px;color:#e0e0e0;font-size:12px;-webkit-text-stroke:0.25px #e0e0e0;">90</div>
<div class="a t" style="left:1370px;top:632px;height:14px;line-height:14px;color:#e0e0e0;font-size:12px;-webkit-text-stroke:0.25px #e0e0e0;">105</div>
<div class="a t" style="left:1424px;top:632px;height:14px;line-height:14px;color:#e0e0e0;font-size:12px;-webkit-text-stroke:0.25px #e0e0e0;">120</div>
<div class="a t" style="left:1479px;top:632px;height:14px;line-height:14px;color:#e0e0e0;font-size:12px;-webkit-text-stroke:0.25px #e0e0e0;">135</div>
<div class="a t" style="left:1533px;top:632px;height:14px;line-height:14px;color:#e0e0e0;font-size:12px;-webkit-text-stroke:0.25px #e0e0e0;">150</div>
<div class="a t" style="left:1588px;top:632px;height:14px;line-height:14px;color:#e0e0e0;font-size:12px;-webkit-text-stroke:0.25px #e0e0e0;">165</div>
<div class="a t" style="left:1642px;top:632px;height:14px;line-height:14px;color:#e0e0e0;font-size:12px;-webkit-text-stroke:0.25px #e0e0e0;">180</div>
<div class="a t" style="left:1697px;top:632px;height:14px;line-height:14px;color:#e0e0e0;font-size:12px;-webkit-text-stroke:0.25px #e0e0e0;">195</div>
<div class="a t" style="left:1751px;top:632px;height:14px;line-height:14px;color:#e0e0e0;font-size:12px;-webkit-text-stroke:0.25px #e0e0e0;">210</div>
<div class="a t" style="left:1805px;top:632px;height:14px;line-height:14px;color:#e0e0e0;font-size:12px;-webkit-text-stroke:0.25px #e0e0e0;">225</div>
<div class="a t" style="left:1860px;top:632px;height:14px;line-height:14px;color:#e0e0e0;font-size:12px;-webkit-text-stroke:0.25px #e0e0e0;">240</div>
<div class="a" style="left:995px;top:654px;width:5px;height:17px;background:#6cc4a8;border-radius:2px;"></div>
<div class="a" style="left:1905px;top:654px;width:5px;height:17px;background:#6cc4a8;border-radius:2px;"></div>
<div class="a" style="left:990px;top:671px;width:918px;height:291px;background:#282828;"></div>
<div class="a" style="left:990px;top:671px;width:10px;height:291px;background:#262626;"></div>
<div class="a" style="left:990px;top:673px;width:10px;height:21px;background:#2e2e2e;"></div>
<div class="a" style="left:986px;top:808px;width:2px;height:2px;background:#888;"></div>
<div class="a" style="left:986px;top:811px;width:2px;height:2px;background:#888;"></div>
<div class="a" style="left:986px;top:814px;width:2px;height:2px;background:#888;"></div>
<div class="a" style="left:986px;top:817px;width:2px;height:2px;background:#888;"></div>
<div class="a" style="left:986px;top:820px;width:2px;height:2px;background:#888;"></div>
<div class="a" style="left:986px;top:823px;width:2px;height:2px;background:#888;"></div>
<div class="a" style="left:1000px;top:674px;width:905px;height:19px;background-color:#78eeb0;background-image:radial-gradient(circle,#52c485 0.8px,transparent 1.2px),repeating-linear-gradient(-45deg,rgba(255,255,255,0.12) 0 12px,rgba(0,0,0,0.06) 12px 24.7px);background-size:3px 3px,auto;border:1.5px solid #f4f4f4;"></div>
<div class="a t" style="left:1008px;top:676px;height:14px;line-height:14px;color:#222;font-size:12px;">Color Array</div>
<div class="a" style="left:1000px;top:696px;width:905px;height:18px;background:repeating-linear-gradient(-45deg,#bbd96d 0 5.7px,#e2f897 5.7px 7.2px,#cdef7d 7.2px 17.7px,#c6e676 17.7px 18.7px,#bbd96d 18.7px 24.7px);border-radius:2px;"></div>
<div class="a t" style="left:1008px;top:698px;height:14px;line-height:14px;color:#2a2a2a;font-size:12px;">Oscillator [Position.Z] Cosine</div>
<div class="a" style="left:1000px;top:718px;width:905px;height:18px;background:repeating-linear-gradient(-45deg,#bbd96d 0 5.7px,#e2f897 5.7px 7.2px,#cdef7d 7.2px 17.7px,#c6e676 17.7px 18.7px,#bbd96d 18.7px 24.7px);border-radius:2px;"></div>
<div class="a t" style="left:1008px;top:720px;height:14px;line-height:14px;color:#2a2a2a;font-size:12px;">Oscillator [Position.X] Sine Driver</div>
<div class="a" style="left:1000px;top:740px;width:905px;height:18px;background:repeating-linear-gradient(-45deg,#5b83d5 0 5.7px,#86b0f6 5.7px 7.2px,#6a95e8 7.2px 17.7px,#6590e2 17.7px 18.7px,#5b83d5 18.7px 24.7px);border-radius:2px;"></div>
<div class="a t" style="left:1008px;top:742px;height:14px;line-height:14px;color:#fff;font-size:12px;">Index Context [Number]</div>
<div class="a" style="left:1000px;top:762px;width:905px;height:18px;background:repeating-linear-gradient(-45deg,#5b83d5 0 5.7px,#86b0f6 5.7px 7.2px,#6a95e8 7.2px 17.7px,#6590e2 17.7px 18.7px,#5b83d5 18.7px 24.7px);border-radius:2px;"></div>
<div class="a t" style="left:1008px;top:764px;height:14px;line-height:14px;color:#fff;font-size:12px;">String Generator [String]</div>
<div class="a" style="left:1000px;top:784px;width:905px;height:18px;background:#ffe57a;border-radius:3px;"></div>
<div class="a t" style="left:1008px;top:786px;height:14px;line-height:14px;color:#222;font-size:12px;">Ellipse Shape</div>
<div class="a" style="left:1000px;top:806px;width:905px;height:18px;background:#b48cf7;border-radius:3px;"></div>
<div class="a t" style="left:1008px;top:808px;height:14px;line-height:14px;color:#fff;font-size:12px;">Cavalry</div>
<div class="a" style="left:1386px;top:654px;width:2px;height:308px;background:#6cc4a8;"></div>
<svg class="a" style="left:1380px;top:643px;" width="15" height="11" viewBox="0 0 15 11"><path d="M0.5 0.5 H14.5 L7.5 10.5 Z" fill="#6cc4a8"/></svg>
<div class="a" style="left:990px;top:962px;width:924px;height:14px;background:#2a2a2a;"></div>
<div class="a" style="left:992px;top:964px;width:921px;height:10px;background:#4f4f4f;border-radius:5px;"></div>
<div class="a" style="left:990px;top:976px;width:924px;height:22px;background:#3d3d3d;"></div>
<div class="a" style="left:994px;top:977px;width:20px;height:20px;background:#2c2c2c;border-radius:4px;border:1px solid #222;"></div>
<svg class="a" style="left:996px;top:979px;" width="16" height="16" viewBox="0 0 16 16"><path d="M2 3 H14 M2 7 H9 M11 7 H14 M2 11 H5 M7 11 H14" stroke="#ddd" stroke-width="1.6"/><path d="M12 15 L15 12 V15 Z" fill="#6cc4a8"/></svg>
<div class="a" style="left:1015px;top:979px;width:150px;height:18px;background:#2a2a2a;border-radius:3px;"></div>
<div class="a t" style="left:1017px;top:981px;height:14px;line-height:14px;color:#e6e6e6;font-size:12px;">Default Keyframe Layer</div>
<div class="a" style="left:1171px;top:979px;width:69px;height:18px;background:#2a2a2a;border-radius:3px;"></div>
<div class="a t" style="left:1176px;top:981px;height:14px;line-height:14px;color:#555;font-size:12px;">F</div>
<div class="a t" style="left:1188px;top:981px;height:14px;line-height:14px;color:#ccc;font-size:12px;">-</div>
<div class="a t" style="left:1247px;top:981px;height:14px;line-height:14px;color:#e6e6e6;font-size:12px;">Align:</div>
<div class="a" style="left:1284px;top:978px;width:53px;height:18px;background:#2c2c2c;border-radius:4px;border:1px solid #1e1e1e;"></div>
<div class="a" style="left:1301px;top:979px;width:1px;height:16px;background:#1e1e1e;"></div>
<div class="a" style="left:1319px;top:979px;width:1px;height:16px;background:#1e1e1e;"></div>
<svg class="a" style="left:1284px;top:978px;" width="54" height="18" viewBox="0 0 54 18"><path d="M3 3 V15" stroke="#ddd"/><rect x="5" y="5" width="3" height="2" fill="#ddd"/><rect x="9" y="5" width="4" height="2" fill="#6cc4a8"/><rect x="5" y="11" width="9" height="2" fill="#ddd"/><path d="M27 2 V16" stroke="#ddd" stroke-dasharray="2 1"/><rect x="22" y="5" width="3" height="2" fill="#ddd"/><rect x="29" y="5" width="3" height="2" fill="#ddd"/><rect x="22" y="11" width="10" height="2" fill="#ddd"/><circle cx="27" cy="6" r="1" fill="#6cc4a8"/><path d="M51 3 V15" stroke="#ddd"/><rect x="42" y="5" width="4" height="2" fill="#6cc4a8"/><rect x="47" y="5" width="3" height="2" fill="#ddd"/><rect x="40" y="11" width="10" height="2" fill="#ddd"/></svg>
<div class="a" style="left:1341px;top:978px;width:18px;height:18px;background:#2c2c2c;border-radius:4px;border:1px solid #1e1e1e;"></div>
<svg class="a" style="left:1341px;top:978px;" width="18" height="18" viewBox="0 0 18 18"><rect x="3.5" y="3.5" width="11" height="11" fill="none" stroke="#ddd" stroke-dasharray="2 1"/><circle cx="9" cy="9" r="1.2" fill="#ddd"/></svg>
<div class="a" style="left:1363px;top:978px;width:29px;height:19px;background:#2c2c2c;border-radius:4px;border:1px solid #1e1e1e;"></div>
<div class="a" style="left:1380px;top:979px;width:1px;height:17px;background:#222;"></div>
<svg class="a" style="left:1363px;top:978px;" width="17" height="19" viewBox="0 0 17 19"><path d="M4 8 A4.5 4.5 0 0 1 12.5 7 L13.5 9" stroke="#ddd" stroke-width="2" fill="none"/><path d="M4 8 L6.5 14" stroke="#ddd" stroke-width="2"/></svg>
<svg class="a" style="left:1381px;top:978px;" width="12" height="19" viewBox="0 0 12 19"><path d="M3 6 V13 L8 9.5 Z" fill="none" stroke="#999"/></svg>
<div class="a" style="left:1397px;top:978px;width:30px;height:19px;background:#2c2c2c;border-radius:4px;border:1px solid #1e1e1e;"></div>
<div class="a" style="left:1413px;top:979px;width:1px;height:17px;background:#222;"></div>
<svg class="a" style="left:1397px;top:978px;" width="16" height="19" viewBox="0 0 16 19"><path d="M1 9.5 H15 M4 6 V13 M8 4 V15 M11 6 V13" stroke="#ddd" stroke-width="1"/></svg>
<svg class="a" style="left:1414px;top:978px;" width="12" height="19" viewBox="0 0 12 19"><path d="M3 6 V13 L8 9.5 Z" fill="none" stroke="#999"/></svg>
<svg class="a" style="left:1742px;top:980px;" width="15" height="15" viewBox="0 0 15 15"><circle cx="6.5" cy="6.5" r="5.3" fill="none" stroke="#ddd" stroke-width="1.1"/><path d="M4 6.5 H9" stroke="#ddd" stroke-width="1.1"/><path d="M10.5 10.5 L13.5 13.5" stroke="#ddd" stroke-width="1.8"/></svg>
<div class="a" style="left:1766px;top:985px;width:114px;height:4px;background:#333;border-radius:2px;"></div>
<svg class="a" style="left:1760px;top:981px;" width="14" height="14" viewBox="0 0 14 14"><circle cx="7" cy="7" r="5" fill="#6cc4a8"/><circle cx="7" cy="7" r="1.5" fill="#4a9a80"/></svg>
<svg class="a" style="left:1886px;top:980px;" width="15" height="15" viewBox="0 0 15 15"><circle cx="6.5" cy="6.5" r="5.3" fill="none" stroke="#ddd" stroke-width="1.1"/><path d="M4 6.5 H9 M6.5 4 V9" stroke="#ddd" stroke-width="1.1"/><path d="M10.5 10.5 L13.5 13.5" stroke="#ddd" stroke-width="1.8"/></svg>
<div class="a" style="left:494px;top:1004px;width:1420px;height:22px;background:#3a3a3a;"></div>
<div class="a" style="left:498px;top:1010px;width:2px;height:2px;background:#888;"></div>
<div class="a" style="left:498px;top:1014px;width:2px;height:2px;background:#888;"></div>
<div class="a" style="left:498px;top:1018px;width:2px;height:2px;background:#888;"></div>
<div class="a" style="left:508px;top:1007px;width:17px;height:17px;background:#2c2c2c;border-radius:3px;border:1px solid #222;"></div>
<svg class="a" style="left:509px;top:1008px;" width="15" height="15" viewBox="0 0 15 15"><path d="M2 2 H13 V10 H9 L11 13 L6 10 H2 Z" fill="#ddd"/><path d="M4 4.5 H11 M4 6.5 H11 M4 8.5 H11" stroke="#444" stroke-width="0.8"/></svg>
<div class="a" style="left:528px;top:1008px;width:18px;height:14px;background:#d4bf6e;border-radius:2px;"></div>
<div class="a t" style="left:533px;top:1009px;height:14px;line-height:14px;color:#1f4d4a;font-size:11px;">0</div>
<div class="a" style="left:554px;top:1012px;width:6px;height:6px;background:#d4bf6e;border-radius:50%;"></div>
<div class="a t" style="left:565px;top:1009px;height:14px;line-height:14px;color:#e6e6e6;font-size:11.4px;">You are working in an unsaved scene.</div>
<div class="a" style="left:1610px;top:1006px;width:80px;height:18px;background:#d4c06a;border-radius:2px;"></div>
<div class="a t" style="left:1615px;top:1009px;height:14px;line-height:14px;color:#3a3320;font-size:11.2px;">Feedback</div>
<svg class="a" style="left:1673px;top:1008px;" width="14" height="14" viewBox="0 0 14 14"><path d="M2 1 H9 L12 4 V13 H2 Z" fill="#f4f4f4" stroke="#5ad06e"/><path d="M5 11 L11 5" stroke="#f26b3a" stroke-width="2"/></svg>
<div class="a" style="left:1693px;top:1006px;width:109px;height:18px;background:#2ecc71;border-radius:2px;"></div>
<div class="a t" style="left:1698px;top:1009px;height:14px;line-height:14px;color:#1a3a24;font-size:11.7px;">Upgrade to Pro</div>
<svg class="a" style="left:1781px;top:1009px;" width="16" height="13" viewBox="0 0 16 13"><path d="M1 5 Q1.5 2 3.5 2.5 L5 6 Q6.5 7.5 6.5 10 Q6.5 12.5 4 12.5 Q1 12.5 1 9 Z" fill="#f5c542"/><path d="M15 5 Q14.5 2 12.5 2.5 L11 6 Q9.5 7.5 9.5 10 Q9.5 12.5 12 12.5 Q15 12.5 15 9 Z" fill="#f5c542"/><path d="M6 1 L6.5 2 M8 0.5 V1.8 M10 1 L9.5 2" stroke="#7fb0d0" stroke-width="0.7"/></svg>
<div class="a" style="left:1805px;top:1006px;width:106px;height:18px;background:#3fa9f5;border-radius:2px;"></div>
<div class="a t" style="left:1810px;top:1009px;height:14px;line-height:14px;color:#10304a;font-size:11.4px;">Tips and Tricks</div>
<svg class="a" style="left:1890px;top:1008px;" width="16" height="16" viewBox="0 0 16 16"><g transform="rotate(45 8 8)"><path d="M8 0.5 C11 3 11 8 10.5 11 H5.5 C5 8 5 3 8 0.5 Z" fill="#f0f0f0"/><path d="M8 0.5 C9.6 1.8 10.3 3 10.6 4 H5.4 C5.7 3 6.4 1.8 8 0.5 Z" fill="#e8443a"/><circle cx="8" cy="6.3" r="1.3" fill="#4a90c8"/><path d="M5.5 8 L3.2 11.5 L5.5 11 Z M10.5 8 L12.8 11.5 L10.5 11 Z" fill="#e8443a"/><path d="M6.5 11 L8 15 L9.5 11 Z" fill="#f5a623"/></g></svg></body></html>
